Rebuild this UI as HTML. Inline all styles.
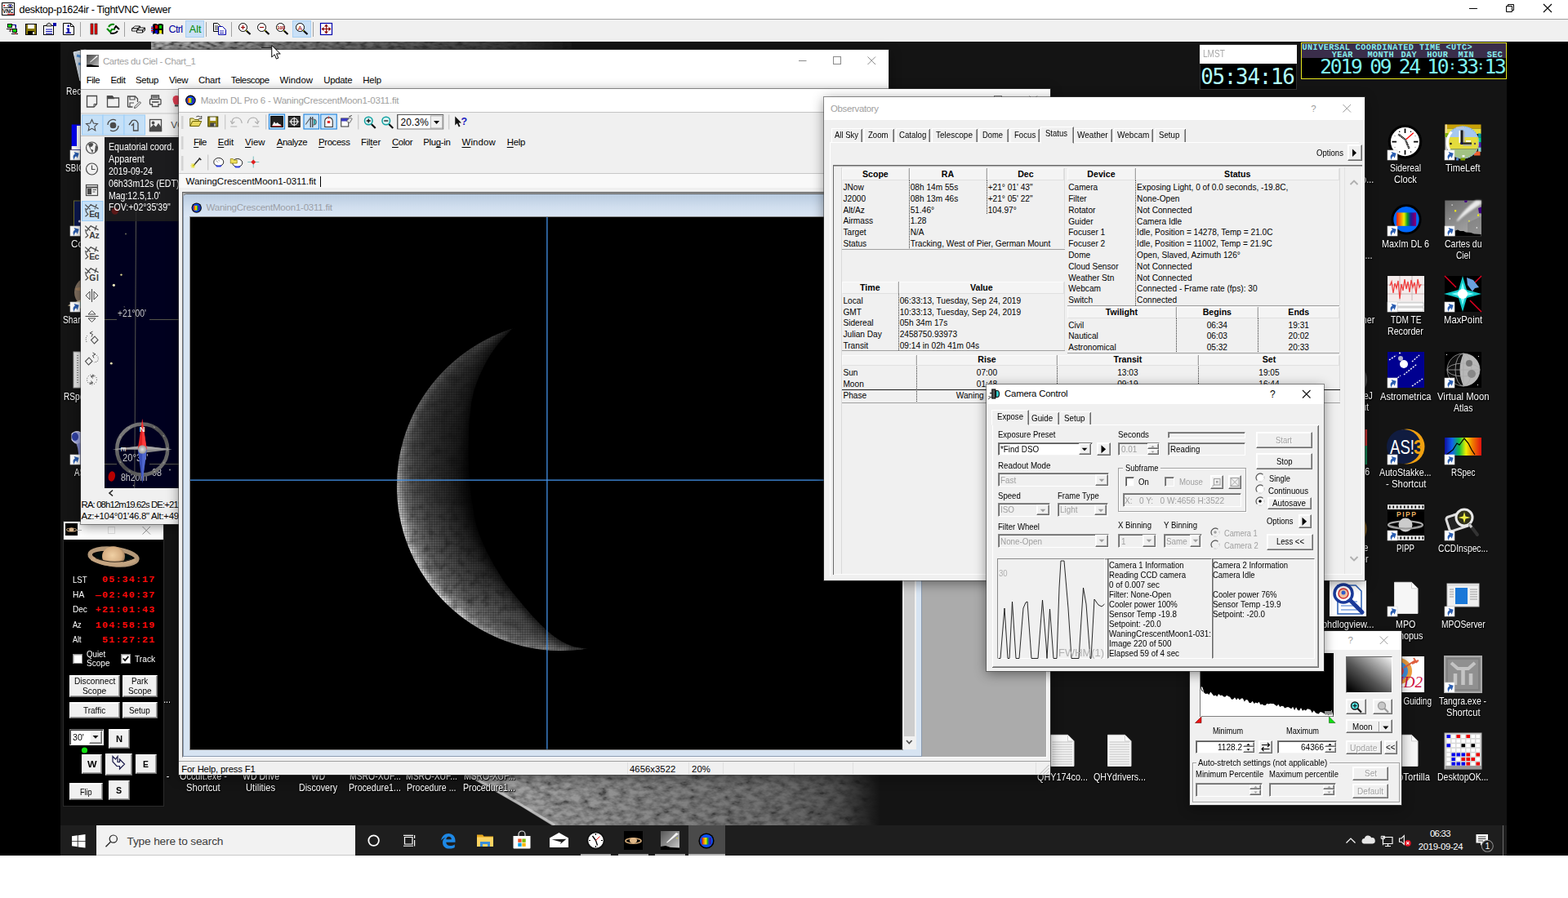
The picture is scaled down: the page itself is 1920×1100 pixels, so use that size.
<!DOCTYPE html>
<html lang="en"><head><meta charset="utf-8"><title>desktop-p1624ir - TightVNC Viewer</title>
<style>

html,body{margin:0;padding:0;background:#fff;}
body{width:1920px;height:1100px;overflow:hidden;}
#root{position:relative;width:1920px;height:1100px;overflow:hidden;background:#fff;font-family:"Liberation Sans",sans-serif;font-size:12px;color:#000;line-height:1;}
#root div,#root span,#root svg{position:absolute;box-sizing:border-box;}
#root span{white-space:pre;}
#root svg{overflow:visible;}
.t{font-size:12px;}
.seg{font-family:"Liberation Sans",sans-serif;}


.dl2{font-size:12.1px;color:#fff;white-space:pre;transform-origin:0 50%;text-shadow:0 1px 2px #000,0 0 2px #000,1px 1px 1px #000;}
.dl{font-size:11.3px;color:#fff;text-align:center;line-height:14px;width:90px;text-shadow:0 1px 2px #000,0 0 2px #000,1px 1px 1px #000;letter-spacing:-0.1px;white-space:pre;}
#root .dl{white-space:pre;}


.mono{font-family:"DejaVu Sans Mono","Liberation Mono",monospace;}
.lmono{font-family:"Liberation Mono",monospace;}
.utc1{font-family:"Liberation Mono",monospace;font-weight:bold;font-size:10.2px;color:#86ecec;letter-spacing:0.4px;}
.utcd{font-family:"DejaVu Sans Mono",monospace;font-size:24.5px;color:#7ff4f4;letter-spacing:-2.2px;}


.btn{background:#f0f0f0;border:1px solid;border-color:#fff #6a6a6a #6a6a6a #fff;box-shadow:inset -1px -1px 0 #a0a0a0, inset 1px 1px 0 #fdfdfd;}


.win{box-shadow:0 0 0 1px rgba(60,60,60,.55),0 3px 14px rgba(0,0,0,.45);}
.mn{font-size:11.35px;color:#000;letter-spacing:-0.1px;}
.cdl{font-size:12.1px;color:#fff;letter-spacing:-0.1px;}


.mu{text-decoration:underline;text-underline-offset:1.5px;text-decoration-thickness:1px;}


.sunk{background:#fff;border:1px solid;border-color:#7a7a7a #f4f4f4 #f4f4f4 #7a7a7a;box-shadow:inset 1px 1px 0 #5a5a5a;}
.sunkg{background:#f0f0f0;border:1px solid;border-color:#8a8a8a #fff #fff #8a8a8a;box-shadow:inset 1px 1px 0 #6a6a6a;}
.grp{border:1px solid #fff;box-shadow:inset 1px 1px 0 #a0a0a0, 1px 1px 0 #fff;border-color:#a0a0a0 #fff #fff #a0a0a0;}
.grp2{border:1px solid #a0a0a0;box-shadow:1px 1px 0 #fff, inset 1px 1px 0 #fff;}


.th{background:#f4f4f4;border:1px solid;border-color:#fcfcfc #e0e0e0 #e0e0e0 #fcfcfc;}


.dis{color:#a0a0a0;}


.tbt{font-size:11.2px;color:#fff;letter-spacing:-0.05px;}

</style></head>
<body>
<div id="root">
<div style="left:0px;top:0px;width:1920px;height:23px;background:#fff;"></div>
<div style="left:0px;top:23px;width:1920px;height:1px;background:#a0a0a0;"></div>
<div style="left:0px;top:24px;width:1920px;height:27px;background:#f0f0f0;"></div>
<svg style="left:2px;top:3px" width="16" height="16" viewBox="0 0 16 16">
<rect x="0.5" y="0.5" width="15" height="15" fill="#fff" stroke="#000"/>
<path d="M2 3l2 1.5M4 3l-2 1.5" stroke="#c00" stroke-width="1"/>
<ellipse cx="10.5" cy="4" rx="3" ry="1.6" fill="#fff" stroke="#000" stroke-width=".8"/><circle cx="10.5" cy="4" r="1.2" fill="#22c"/>
<text x="1.2" y="13" font-family="Liberation Sans,sans-serif" font-weight="bold" font-size="8" textLength="13.5" lengthAdjust="spacingAndGlyphs" fill="#000">VNC</text>
<path d="M2 6.5h12" stroke="#000" stroke-width=".8"/>
<path d="M7 14.2h8" stroke="#e00" stroke-width="1"/>
</svg>
<span class="t" style="left:23.50px;top:6.00px;font-size:12.6px;color:#000;letter-spacing:-0.351px;">desktop-p1624ir - TightVNC Viewer</span>
<svg style="left:1780px;top:0" width="140" height="23" viewBox="0 0 140 23">
<path d="M19 10.5h10" stroke="#000" stroke-width="1"/>
<path d="M64.5 7.5h7v7h-7z M66.5 7.5v-2h7v7h-2" fill="none" stroke="#000" stroke-width="1"/>
<path d="M110 5l10 10M120 5l-10 10" stroke="#000" stroke-width="1.1"/>
</svg>
<svg style="left:0;top:0" width="420" height="51" viewBox="0 0 420 51"><rect x="227.5" y="25.5" width="22" height="20" fill="#c9e0f7" stroke="#a8d0f3"/><rect x="358.5" y="25.5" width="22" height="20" fill="#c9e0f7" stroke="#a8d0f3"/><path d="M98.5 27v18" stroke="#a0a0a0" stroke-width="1"/><path d="M152.5 27v18" stroke="#a0a0a0" stroke-width="1"/><path d="M252.5 27v18" stroke="#a0a0a0" stroke-width="1"/><path d="M283.5 27v18" stroke="#a0a0a0" stroke-width="1"/><path d="M383.5 27v18" stroke="#a0a0a0" stroke-width="1"/><g><rect x="9.5" y="29.5" width="5" height="4" fill="#0e0" stroke="#000"/><rect x="15.5" y="35.5" width="5" height="4" fill="#0e0" stroke="#000"/><path d="M8 35.5h7M14 41.5h8M15 30.5h4v4M11 38h3" stroke="#000" fill="none"/><path d="M12 36.5h2M18 41h2" stroke="#e00"/><path d="M16 30.5h3.5v4" stroke="#00a" fill="none"/></g><g><rect x="31.5" y="29.5" width="13" height="13" fill="#8a7a00" stroke="#000"/><rect x="34" y="30" width="8" height="5" fill="#fff"/><rect x="34" y="38" width="8" height="5" fill="#000"/><rect x="40" y="39" width="2" height="3" fill="#ddd"/></g><g><rect x="53.5" y="31.5" width="12" height="11" fill="#fff" stroke="#000"/><path d="M57 30l3-2 3 2v2h-6z" fill="#ccc" stroke="#000" stroke-width=".8"/><rect x="65" y="28" width="4" height="4" fill="#00a"/><path d="M56 36h8M56 38.5h8M56 41h8" stroke="#00a"/></g><g><path d="M77.5 28.5h9l4 4v10h-13z" fill="#fff" stroke="#000"/><path d="M86.5 28.5v4h4" fill="none" stroke="#000"/><rect x="82.5" y="30.5" width="2.5" height="2.5" fill="#00a"/><path d="M81.5 34.5h3.5v5h2v1.5h-6.5v-1.5h2v-3.5h-1z" fill="#00a"/></g><g><rect x="111" y="29" width="3" height="13" fill="#e00" stroke="#000" stroke-width=".6"/><rect x="116" y="29" width="3" height="13" fill="#e00" stroke="#000" stroke-width=".6"/></g><g><path d="M131 35l4 4 2-3h4" fill="none" stroke="#080" stroke-width="2.2"/><path d="M133 33q2-4 7-3" fill="none" stroke="#080" stroke-width="2"/><path d="M146 36l-4-4-2 3" fill="none" stroke="#000" stroke-width="2"/><path d="M144 38q-3 4-9 2.5" fill="none" stroke="#000" stroke-width="2"/></g><g fill="#fff" stroke="#000" stroke-width=".9"><path d="M161.500 35l4-3h6l-3 3z"/><path d="M161.500 35h7v3h-7z"/><path d="M168.500 35l3-3v3l-3 3z" fill="#bbb"/><path d="M167.500 37l4-3h6l-3 3z"/><path d="M167.500 37h7v3h-7z"/><path d="M174.500 37l3-3v3l-3 3z" fill="#bbb"/></g><g><path d="M187 30q3-2 6 0v12q-3-2-6 0z" fill="#000"/><path d="M193 30q3-2 7 0v12q-4-2-7 0z" fill="#000"/><rect x="190" y="31" width="3" height="4" fill="#e00"/><rect x="195" y="31" width="3" height="4" fill="#0c0"/><rect x="190" y="37" width="3" height="4" fill="#00c"/><rect x="195" y="37" width="3" height="4" fill="#ee0"/><path d="M185 33h3M185 36h3M185 39h3" stroke="#00c"/><path d="M185 34.500h3M185 37.500h3" stroke="#e00"/></g><g fill="#fff" stroke="#000"><path d="M261.500 28.500h5l3 3v7h-8z"/><path d="M263 32h4M263 34h4M263 36h4" stroke-width=".8"/><path d="M267.500 32.500h5l4 4v6h-9z" stroke="#00a"/><path d="M269 38h5M269 40.500h5" stroke="#00a" stroke-width=".9"/></g><g><path d="M301 37l5.500 5" stroke="#000" stroke-width="2.2"/><path d="M300 36l2 2" stroke="#dd0" stroke-width="1.500"/><circle cx="297.5" cy="33.500" r="5" fill="#fff" stroke="#000" stroke-width="1"/><path d="M295 33.500h5M297.500 31v5" stroke="#900" stroke-width="1.200"/></g><g><path d="M324 37l5.500 5" stroke="#000" stroke-width="2.2"/><path d="M323 36l2 2" stroke="#dd0" stroke-width="1.500"/><circle cx="320.5" cy="33.500" r="5" fill="#fff" stroke="#000" stroke-width="1"/><path d="M318 33.500h5" stroke="#900" stroke-width="1.200"/></g><g><path d="M347 37l5.500 5" stroke="#000" stroke-width="2.2"/><path d="M346 36l2 2" stroke="#dd0" stroke-width="1.500"/><circle cx="343.5" cy="33.500" r="5" fill="#fff" stroke="#000" stroke-width="1"/><text x="339.500" y="36" font-size="6" font-family="Liberation Sans,sans-serif" font-weight="bold" fill="#900" textLength="9" lengthAdjust="spacingAndGlyphs">100</text></g><g><path d="M371 37l5.500 5" stroke="#000" stroke-width="2.2"/><path d="M370 36l2 2" stroke="#dd0" stroke-width="1.500"/><circle cx="367.5" cy="33.500" r="5" fill="#fff" stroke="#000" stroke-width="1"/><text x="364.800" y="36.500" font-size="8" font-family="Liberation Sans,sans-serif" fill="#900">A</text></g><g><rect x="392.500" y="28.500" width="14" height="14" fill="#fff" stroke="#00a" stroke-width="1.200"/><path d="M399.500 29.500l-2.500 3h5zM399.500 41.500l-2.500-3h5zM393.500 35.500l3-2.500v5zM405.500 35.500l-3-2.500v5z" fill="#800"/><path d="M399.500 32v7M396 35.500h7" stroke="#800" stroke-width="1"/></g></svg>
<span class="t" style="left:206.50px;top:30.00px;font-size:12.6px;color:#0000a0;letter-spacing:-0.699px;">Ctrl</span>
<span class="t" style="left:231.80px;top:30.00px;font-size:12.6px;color:#008a00;letter-spacing:-0.002px;">Alt</span>
<div style="left:0px;top:51px;width:1920px;height:997px;background:#000;"></div>
<div style="left:74px;top:51px;width:1771px;height:960px;background:#141414;"></div>
<svg style="left:74px;top:51px" width="1772" height="960" viewBox="74 51 1772 960">
<defs>
<filter id="crat" x="0" y="0" width="100%" height="100%"><feTurbulence type="fractalNoise" baseFrequency="0.09 0.16" numOctaves="3" seed="7" result="n"/><feColorMatrix in="n" type="matrix" values="0 0 0 0 0  0 0 0 0 0  0 0 0 0 0  1.9 0 0 0 -0.55" result="a"/><feComposite in="SourceGraphic" in2="a" operator="arithmetic" k1="-0.75" k2="1" k3="0" k4="0"/></filter>
<filter id="crat2" x="0" y="0" width="100%" height="100%"><feTurbulence type="fractalNoise" baseFrequency="0.12 0.3" numOctaves="2" seed="3" result="n"/><feColorMatrix in="n" type="matrix" values="0 0 0 0 0  0 0 0 0 0  0 0 0 0 0  2.2 0 0 0 -0.6" result="a"/><feComposite in="SourceGraphic" in2="a" operator="arithmetic" k1="-0.8" k2="1" k3="0" k4="0"/></filter>
<linearGradient id="wg" x1="570" y1="0" x2="1078" y2="0" gradientUnits="userSpaceOnUse"><stop offset="0" stop-color="#141414" stop-opacity="0"/><stop offset=".3" stop-color="#141414" stop-opacity=".15"/><stop offset=".55" stop-color="#141414" stop-opacity=".3"/><stop offset=".78" stop-color="#141414" stop-opacity=".42"/><stop offset=".9" stop-color="#141414" stop-opacity=".6"/><stop offset=".96" stop-color="#141414" stop-opacity=".85"/><stop offset="1" stop-color="#141414" stop-opacity="1"/></linearGradient>
<linearGradient id="wt" x1="185" y1="0" x2="700" y2="0" gradientUnits="userSpaceOnUse"><stop offset="0" stop-color="#b8b8b8"/><stop offset=".25" stop-color="#8c8c8c"/><stop offset=".6" stop-color="#5c5c5c"/><stop offset=".85" stop-color="#3a3a3a"/><stop offset="1" stop-color="#141414"/></linearGradient>
</defs>
<g filter="url(#crat)"><path d="M513 920 Q599 962 677 1011 L1080 1011 L1080 940 L553 920z" fill="#acacac"/></g><path d="M513 920 Q599 962 677 1011 L1082 1011 L1082 940 L553 920z" fill="url(#wg)"/><path d="M514 919 Q600 961 679 1011" fill="none" stroke="#e0e0e0" stroke-opacity=".55" stroke-width="3.500"/>
<g filter="url(#crat2)"><rect x="185" y="51" width="515" height="11" fill="url(#wt)"/></g>
</svg>
<span class="dl2" style="left:1643.12px;top:214.00px;transform:scaleX(0.8825);">Studio...</span>
<span class="dl2" style="left:1651.81px;top:307.00px;transform:scaleX(0.8825);">Tool...</span>
<span class="dl2" style="left:1616.04px;top:386.00px;transform:scaleX(0.8825);">CloudWatcher</span>
<span class="dl2" style="left:1621.36px;top:479.00px;transform:scaleX(0.8825);">AstroImageJ</span>
<span class="dl2" style="left:1630.01px;top:493.00px;transform:scaleX(0.8825);">- Shortcut</span>
<span class="dl2" style="left:1625.06px;top:572.00px;transform:scaleX(0.8825);">RegiStax 6</span>
<span class="dl2" style="left:1618.92px;top:665.00px;transform:scaleX(0.8825);">FireCapture</span>
<span class="dl2" style="left:1630.77px;top:679.00px;transform:scaleX(0.8825);">Launcher</span>
<svg style="left:1628.3px;top:431.300px" width="45" height="45"><circle cx="26" cy="34" r="20" fill="#505050"/></svg>
<svg style="left:1628.3px;top:524.600px" width="45" height="45"><rect x="10" y="1" width="36" height="43" fill="#284a9a"/><rect x="42" y="1" width="4" height="20" fill="#c03030"/><rect x="42" y="21" width="4" height="23" fill="#108050"/></svg>
<svg style="left:1628.3px;top:617.800px" width="45" height="45"><circle cx="24" cy="30" r="21.500" fill="#8a6420"/></svg>
<svg style="left:1628.3px;top:711.12px" width="45" height="45" viewBox="0 0 45 45"><rect x="0" y="0" width="45" height="44" fill="#fff"/><path d="M10 6h22l7 7v28H10z" fill="#fff" stroke="#2a5fb4" stroke-width="1.500"/><path d="M14 26h20M14 31h20M14 36h20" stroke="#7aa0e0" stroke-width="1.300"/><circle cx="17" cy="16" r="11" fill="#fff" stroke="#1a3a9a" stroke-width="3.500"/><circle cx="17" cy="16" r="6" fill="#f0c0a0" stroke="#d03030" stroke-width="1.500"/><circle cx="17" cy="15" r="2.500" fill="#3060d0"/><path d="M26 25l14 14" stroke="#1a3a9a" stroke-width="5" stroke-linecap="round"/></svg><span class="dl2" style="left:1619.05px;top:759.00px;transform:scaleX(0.9077);">phdlogview...</span>
<svg style="left:1698.7px;top:151.5px" width="45" height="45" viewBox="0 0 45 45"><circle cx="21.500" cy="21.600" r="20.800" fill="#000"/><circle cx="21.500" cy="21.600" r="17.600" fill="#fff"/><path d="M21.500 5.500v5.500M21.500 32v5.500M5.500 21.600h5.500M32 21.600h5.500" stroke="#000" stroke-width="1.700"/><g fill="#000"><circle cx="14.700" cy="9.200" r=".8"/><circle cx="28.500" cy="9.200" r=".8"/><circle cx="14.700" cy="34" r=".8"/><circle cx="28.500" cy="34" r=".8"/></g><g fill="#aaa"><circle cx="9" cy="14.500" r=".8"/><circle cx="34" cy="14.500" r=".8"/><circle cx="9" cy="28.500" r=".8"/><circle cx="34" cy="28.500" r=".8"/></g><path d="M22.500 19.500L13.300 12.500M22.500 20.500l4 9.500" stroke="#000" stroke-width="2.400" stroke-dasharray="1.200 .600"/><path d="M22.800 18.800l9-8" stroke="#f00" stroke-width="1.300"/><g transform="translate(0,32)"><rect x="0" y="0" width="12" height="12" fill="#fff" stroke="#d4d4d4" stroke-width=".6"/><g transform="rotate(-28 6 6)"><path d="M2.200 10.800C2 6.500 3.800 4.800 6.600 4.700V1.800L11.200 6.200L6.600 10.600V7.600C4.600 7.600 3.300 8.600 2.200 10.800z" fill="#2a5db0"/></g></g></svg><span class="dl2" style="left:1702.20px;top:200.00px;transform:scaleX(0.8559);">Sidereal</span><span class="dl2" style="left:1707.30px;top:214.00px;transform:scaleX(0.9188);">Clock</span>
<svg style="left:1769.0px;top:151.5px" width="45" height="45" viewBox="0 0 45 45"><defs><clipPath id="tlc"><circle cx="22" cy="22.500" r="20"/></clipPath></defs><rect x="0.500" y="0.500" width="44" height="5" fill="#c8a008"/><rect x="0.500" y="5.500" width="44" height="6.500" fill="#e6de40"/><rect x="0.500" y="0.500" width="2.500" height="11" fill="#f0d890"/><rect x="0.500" y="12" width="3" height="20" fill="#c8c8c8"/><rect x="0.500" y="11" width="4" height="5" fill="#80b000"/><rect x="41" y="11.500" width="3.500" height="5" fill="#0098a0"/><rect x="41" y="16.500" width="3.500" height="6" fill="#00d890"/><rect x="41" y="22.500" width="3.500" height="6" fill="#5020c0"/><rect x="41" y="28.500" width="3.500" height="5.500" fill="#80d0d0"/><rect x="36" y="33.500" width="7.500" height="5" fill="#f06030"/><rect x="37" y="16" width="4.500" height="14" fill="#d0a040"/><g clip-path="url(#tlc)"><rect x="0" y="0" width="45" height="16" fill="#a6c8f0"/><rect x="0" y="16" width="45" height="14.500" fill="#e4dc3c"/><rect x="0" y="30.500" width="45" height="15" fill="#a2c284"/></g><circle cx="22" cy="22.500" r="19.500" fill="none" stroke="#8ab0e0" stroke-width="1.300" stroke-dasharray="1.500 1.500"/><path d="M8.500 9.500A19 19 0 0 0 6 32" fill="none" stroke="#fff" stroke-width="3.200"/><path d="M14 4.500h10" stroke="#c8c8d0" stroke-width="1.500"/><rect x="17.500" y="8" width="2" height="15" fill="#fff"/><rect x="26" y="20" width="6" height="1.800" fill="#fff"/><rect x="22.500" y="8.500" width="2" height="16.500" fill="#b0b0b0"/><rect x="22.500" y="25" width="10.500" height="1.600" fill="#b0b0b0"/><rect x="19.500" y="7.500" width="3" height="17" fill="#181818"/><rect x="19.500" y="22.500" width="13.500" height="2.300" fill="#282828"/><rect x="19.500" y="22.500" width="2.500" height="2.300" fill="#000060"/><circle cx="7.500" cy="24" r="1.200" fill="#111"/><circle cx="37" cy="24" r="1.200" fill="#555"/><rect x="14" y="41.500" width="3" height="3" fill="#5080d0"/><rect x="19.500" y="41.500" width="5.500" height="3" fill="#80a000"/><rect x="21.500" y="38" width="3" height="2.500" fill="#f0f0f0"/><g transform="translate(0,32)"><rect x="0" y="0" width="12" height="12" fill="#fff" stroke="#d4d4d4" stroke-width=".6"/><g transform="rotate(-28 6 6)"><path d="M2.200 10.800C2 6.500 3.800 4.800 6.600 4.700V1.800L11.200 6.200L6.600 10.600V7.600C4.600 7.600 3.300 8.600 2.200 10.800z" fill="#2a5db0"/></g></g></svg><span class="dl2" style="left:1770.25px;top:200.00px;transform:scaleX(0.9116);">TimeLeft</span>
<svg style="left:1698.7px;top:244.76999999999998px" width="45" height="45" viewBox="0 0 45 45"><defs><linearGradient id="rb" x1="0" x2="1"><stop offset="0" stop-color="#f02020"/><stop offset=".2" stop-color="#f88000"/><stop offset=".38" stop-color="#f0f000"/><stop offset=".55" stop-color="#10a020"/><stop offset=".72" stop-color="#1020a0"/><stop offset=".86" stop-color="#600080"/><stop offset="1" stop-color="#900070"/></linearGradient></defs><circle cx="23" cy="23.800" r="18.600" fill="#000"/><circle cx="23" cy="23.800" r="15.700" fill="#0068ff"/><rect x="11" y="15.400" width="24.100" height="16.400" fill="url(#rb)"/><g transform="translate(0,32)"><rect x="0" y="0" width="12" height="12" fill="#fff" stroke="#d4d4d4" stroke-width=".6"/><g transform="rotate(-28 6 6)"><path d="M2.200 10.800C2 6.500 3.800 4.800 6.600 4.700V1.800L11.200 6.200L6.600 10.600V7.600C4.600 7.600 3.300 8.600 2.200 10.800z" fill="#2a5db0"/></g></g></svg><span class="dl2" style="left:1692.20px;top:293.00px;transform:scaleX(0.8954);">MaxIm DL 6</span>
<svg style="left:1769.0px;top:244.76999999999998px" width="45" height="45" viewBox="0 0 45 45"><defs><linearGradient id="cg" x1="0" y1="0" x2=".6" y2="1"><stop offset="0" stop-color="#6a6a6a"/><stop offset=".55" stop-color="#8c8c8c"/><stop offset="1" stop-color="#a8a8a8"/></linearGradient><filter id="cbl" x="-20%" y="-20%" width="140%" height="140%"><feGaussianBlur stdDeviation="1.100"/></filter></defs><rect x="0.300" y="0.500" width="44.700" height="43.700" fill="url(#cg)"/><path d="M28 44V28L45 20V44z" fill="#7c7c7c" opacity=".6"/><path d="M13 37.500l3-1 3 1.500h4l3 1.500 6 .5 4 1.500 8.500 .5V44.200H13z" fill="#000"/><g filter="url(#cbl)"><path d="M14.500 25.500Q24 11 38 0.500h6.500V5Q28 15 16 26z" fill="#f4f4f4" opacity=".9"/></g><path d="M24 0.500h4l-1 2.500h-2.500zM41 10l4-1.500v8l-3-.5z" fill="#400080"/><g fill="#f0e818"><rect x="12" y="12.200" width="2.200" height="2.200"/><rect x="40" y="17.500" width="2.200" height="2.200"/><rect x="29" y="24.800" width="1.800" height="1.800" fill="#d8d850"/></g><g fill="#fff"><rect x="8.500" y="5.500" width="1.200" height="1.200"/><rect x="5.700" y="22.300" width="1.300" height="1.300"/><rect x="38.700" y="33.300" width="1.300" height="1.300"/></g><g transform="translate(0,32)"><rect x="0" y="0" width="12" height="12" fill="#fff" stroke="#d4d4d4" stroke-width=".6"/><g transform="rotate(-28 6 6)"><path d="M2.200 10.800C2 6.500 3.800 4.800 6.600 4.700V1.800L11.200 6.200L6.600 10.600V7.600C4.600 7.600 3.300 8.600 2.200 10.800z" fill="#2a5db0"/></g></g></svg><span class="dl2" style="left:1768.75px;top:293.00px;transform:scaleX(0.8673);">Cartes du</span><span class="dl2" style="left:1782.75px;top:307.00px;transform:scaleX(0.8395);">Ciel</span>
<svg style="left:1698.7px;top:338.03999999999996px" width="45" height="45" viewBox="0 0 45 45"><rect x="0" y="0" width="45" height="44" fill="#f4ecec"/><path d="M0 11h45M0 22h45M15 0v30M30 0v30" stroke="#c8b8b8" stroke-width="1"/><path d="M3 12l2-5 2 14 2-12 2 6 2-9 2 22 2-18 2 8 2-14 2 12 2-9 2 13 2-15 2 9 2-6 2 14 2-18 2 10 2-4" stroke="#f04040" stroke-width="1.300" fill="none"/><rect x="0" y="31" width="45" height="13" fill="#e8e8e8"/><rect x="12" y="33" width="32" height="4" fill="#fff" stroke="#999" stroke-width=".5"/><rect x="12" y="39" width="32" height="4" fill="#fff" stroke="#999" stroke-width=".5"/><g transform="translate(0,32)"><rect x="0" y="0" width="12" height="12" fill="#fff" stroke="#d4d4d4" stroke-width=".6"/><g transform="rotate(-28 6 6)"><path d="M2.200 10.800C2 6.500 3.800 4.800 6.600 4.700V1.800L11.200 6.200L6.600 10.600V7.600C4.600 7.600 3.300 8.600 2.200 10.800z" fill="#2a5db0"/></g></g></svg><span class="dl2" style="left:1702.50px;top:386.00px;transform:scaleX(0.8345);">TDM TE</span><span class="dl2" style="left:1699.30px;top:400.00px;transform:scaleX(0.8801);">Recorder</span>
<svg style="left:1769.0px;top:338.03999999999996px" width="45" height="45" viewBox="0 0 45 45"><rect x="0" y="0" width="45" height="44" fill="#000"/><path d="M0 0l14 14M45 0L31 14M31 30l14 14" stroke="#e00020" stroke-width="1.500"/><path d="M22 0l5 17 18 5-18 5-5 17-5-17-18-5 18-5z" fill="#10c8c8"/><path d="M22 8l3 11 11 3-11 3-3 11-3-11-11-3 11-3z" fill="#80ffff"/><circle cx="22" cy="22" r="6" fill="#fff"/><path d="M27 2l8 3 7 9-5 1-3 4-6-8z" fill="#6aa0e0"/><g transform="translate(0,32)"><rect x="0" y="0" width="12" height="12" fill="#fff" stroke="#d4d4d4" stroke-width=".6"/><g transform="rotate(-28 6 6)"><path d="M2.200 10.800C2 6.500 3.800 4.800 6.600 4.700V1.800L11.200 6.200L6.600 10.600V7.600C4.600 7.600 3.300 8.600 2.200 10.800z" fill="#2a5db0"/></g></g></svg><span class="dl2" style="left:1767.95px;top:386.00px;transform:scaleX(0.9338);">MaxPoint</span>
<svg style="left:1698.7px;top:431.31px" width="45" height="45" viewBox="0 0 45 45"><rect x="0" y="0" width="45" height="44" fill="#000090"/><g stroke="#fff" stroke-width="1.400" stroke-dasharray="2 1.500"><path d="M2 10l9-6M30 12l9-8M20 28l16-13M7 36l9-7M30 42l13-9"/></g><circle cx="20" cy="15" r="5" fill="#fff"/><circle cx="16" cy="8" r="3" fill="#ddd" opacity=".8"/><circle cx="15" cy="1.500" r="1" fill="#fff"/><g transform="translate(0,32)"><rect x="0" y="0" width="12" height="12" fill="#fff" stroke="#d4d4d4" stroke-width=".6"/><g transform="rotate(-28 6 6)"><path d="M2.200 10.800C2 6.500 3.800 4.800 6.600 4.700V1.800L11.200 6.200L6.600 10.600V7.600C4.600 7.600 3.300 8.600 2.200 10.800z" fill="#2a5db0"/></g></g></svg><span class="dl2" style="left:1690.00px;top:480.00px;transform:scaleX(0.9188);">Astrometrica</span>
<svg style="left:1769.0px;top:431.31px" width="45" height="45" viewBox="0 0 45 45"><rect x="0" y="0" width="45" height="44" fill="#000"/><circle cx="23" cy="22" r="20" fill="#111" stroke="#999" stroke-width=".8"/><path d="M23 2A20 20 0 0 1 23 42Q14 22 23 2z" fill="#b8b8b8"/><g fill="none" stroke="#aaa" stroke-width=".8"><ellipse cx="23" cy="22" rx="10" ry="20"/><ellipse cx="23" cy="22" rx="20" ry="8"/><path d="M3 22h40M23 2v40"/></g><circle cx="30" cy="14" r="4" fill="#777"/><circle cx="33" cy="27" r="5" fill="#888"/><g fill="#fff"><rect x="2" y="3" width="1" height="1"/><rect x="41" y="5" width="1" height="1"/><rect x="40" y="40" width="1" height="1"/><rect x="4" y="38" width="1" height="1"/></g><g transform="translate(0,32)"><rect x="0" y="0" width="12" height="12" fill="#fff" stroke="#d4d4d4" stroke-width=".6"/><g transform="rotate(-28 6 6)"><path d="M2.200 10.800C2 6.500 3.800 4.800 6.600 4.700V1.800L11.200 6.200L6.600 10.600V7.600C4.600 7.600 3.300 8.600 2.200 10.800z" fill="#2a5db0"/></g></g></svg><span class="dl2" style="left:1759.70px;top:480.00px;transform:scaleX(0.9393);">Virtual Moon</span><span class="dl2" style="left:1779.80px;top:494.00px;transform:scaleX(0.8699);">Atlas</span>
<svg style="left:1698.7px;top:524.5799999999999px" width="45" height="45" viewBox="0 0 45 45"><circle cx="24" cy="22" r="21.500" fill="#f0a010"/><circle cx="20" cy="22" r="21" fill="#101c40"/><text x="3" y="31" font-family="Liberation Sans,sans-serif" font-size="24" fill="#fff" textLength="30" lengthAdjust="spacingAndGlyphs">AS!</text><text x="32" y="31" font-family="Liberation Sans,sans-serif" font-size="24" fill="#f0a010" font-weight="bold" textLength="12" lengthAdjust="spacingAndGlyphs">3</text><g transform="translate(0,32)"><rect x="0" y="0" width="12" height="12" fill="#fff" stroke="#d4d4d4" stroke-width=".6"/><g transform="rotate(-28 6 6)"><path d="M2.200 10.800C2 6.500 3.800 4.800 6.600 4.700V1.800L11.200 6.200L6.600 10.600V7.600C4.600 7.600 3.300 8.600 2.200 10.800z" fill="#2a5db0"/></g></g></svg><span class="dl2" style="left:1689.40px;top:573.00px;transform:scaleX(0.8837);">AutoStakke...</span><span class="dl2" style="left:1696.50px;top:587.00px;transform:scaleX(0.9418);">- Shortcut</span>
<svg style="left:1769.0px;top:524.5799999999999px" width="45" height="45" viewBox="0 0 45 45"><defs><linearGradient id="sp" x1="0" x2="1"><stop offset="0" stop-color="#1010a0"/><stop offset=".2" stop-color="#1060f0"/><stop offset=".4" stop-color="#10c040"/><stop offset=".58" stop-color="#f0f000"/><stop offset=".75" stop-color="#f08000"/><stop offset="1" stop-color="#e01010"/></linearGradient></defs><rect x="0" y="11" width="45" height="22" fill="url(#sp)"/><path d="M2 32l8-6 5-8 3 2 6-8 5 6 4 8 4 6" stroke="#000" stroke-width="1.200" fill="none"/><g transform="translate(0,32)"><rect x="0" y="0" width="12" height="12" fill="#fff" stroke="#d4d4d4" stroke-width=".6"/><g transform="rotate(-28 6 6)"><path d="M2.200 10.800C2 6.500 3.800 4.800 6.600 4.700V1.800L11.200 6.200L6.600 10.600V7.600C4.600 7.600 3.300 8.600 2.200 10.800z" fill="#2a5db0"/></g></g></svg><span class="dl2" style="left:1776.85px;top:573.00px;transform:scaleX(0.8067);">RSpec</span>
<svg style="left:1698.7px;top:617.8499999999999px" width="45" height="45" viewBox="0 0 45 45"><rect x="0" y="0" width="45" height="44" fill="#000"/><rect x="0" y="0" width="45" height="6" fill="#ddd"/><rect x="0" y="38" width="45" height="6" fill="#ddd"/><path d="M2 3h42M2 41h42" stroke="#000" stroke-width="3" stroke-dasharray="1.500 3"/><text x="11" y="15" font-family="Liberation Sans,sans-serif" font-size="8.500" font-weight="bold" fill="#e8b060" textLength="24">PIPP</text><ellipse cx="22" cy="25" rx="21" ry="4.500" fill="none" stroke="#aaa" stroke-width="2.200"/><circle cx="22" cy="25" r="8.500" fill="#ccc"/><path d="M2 26q20 7 41 0" stroke="#999" stroke-width="2" fill="none"/><g transform="translate(0,32)"><rect x="0" y="0" width="12" height="12" fill="#fff" stroke="#d4d4d4" stroke-width=".6"/><g transform="rotate(-28 6 6)"><path d="M2.200 10.800C2 6.500 3.800 4.800 6.600 4.700V1.800L11.200 6.200L6.600 10.600V7.600C4.600 7.600 3.300 8.600 2.200 10.800z" fill="#2a5db0"/></g></g></svg><span class="dl2" style="left:1710.15px;top:666.00px;transform:scaleX(0.8015);">PIPP</span>
<svg style="left:1769.0px;top:617.8499999999999px" width="45" height="45" viewBox="0 0 45 45"><g transform="rotate(-18 22 22)"><rect x="4" y="10" width="26" height="18" rx="3" fill="#222" stroke="#ddd" stroke-width="3"/></g><circle cx="24" cy="16" r="10" fill="#30301a" stroke="#e8e8e8" stroke-width="3"/><path d="M24 9l1.500 5.500 6 1.500-6 1.500-1.500 5.500-1.500-5.500-6-1.500 6-1.500z" fill="#ee4"/><path d="M31 25l9 12" stroke="#333" stroke-width="4" stroke-linecap="round"/><path d="M30 24l3 4" stroke="#ccc" stroke-width="3"/><g transform="translate(0,32)"><rect x="0" y="0" width="12" height="12" fill="#fff" stroke="#d4d4d4" stroke-width=".6"/><g transform="rotate(-28 6 6)"><path d="M2.200 10.800C2 6.500 3.800 4.800 6.600 4.700V1.800L11.200 6.200L6.600 10.600V7.600C4.600 7.600 3.300 8.600 2.200 10.800z" fill="#2a5db0"/></g></g></svg><span class="dl2" style="left:1760.95px;top:666.00px;transform:scaleX(0.8492);">CCDInspec...</span>
<svg style="left:1698.7px;top:711.12px" width="45" height="45" viewBox="0 0 45 45"><path d="M8.500 2.300h21l7.500 7.500v30.700H8.500z" fill="#f6f6f6" stroke="#dcdcdc" stroke-width="1"/><path d="M29.500 2.300v7.500h7.500" fill="#fff" stroke="#d0d0d0" stroke-width="1"/><g transform="translate(0,32)"><rect x="0" y="0" width="12" height="12" fill="#fff" stroke="#d4d4d4" stroke-width=".6"/><g transform="rotate(-28 6 6)"><path d="M2.200 10.800C2 6.500 3.800 4.800 6.600 4.700V1.800L11.200 6.200L6.600 10.600V7.600C4.600 7.600 3.300 8.600 2.200 10.800z" fill="#2a5db0"/></g></g></svg><span class="dl2" style="left:1709.05px;top:759.00px;transform:scaleX(0.8816);">MPO</span><span class="dl2" style="left:1699.45px;top:773.00px;transform:scaleX(0.8981);">Canopus</span>
<svg style="left:1769.0px;top:711.12px" width="45" height="45" viewBox="0 0 45 45"><rect x="3" y="4" width="39" height="28" fill="#f0f0f0" stroke="#c0c0c0"/><rect x="3" y="4" width="39" height="3" fill="#ddd"/><rect x="13" y="9" width="15" height="20" fill="#1a78d8"/><path d="M6 11h5M6 14h5M6 17h5M6 20h5M31 11h9M31 14h9M31 17h9M31 20h9M31 23h9" stroke="#999" stroke-width="1"/><g transform="translate(0,32)"><rect x="0" y="0" width="12" height="12" fill="#fff" stroke="#d4d4d4" stroke-width=".6"/><g transform="rotate(-28 6 6)"><path d="M2.200 10.800C2 6.500 3.800 4.800 6.600 4.700V1.800L11.200 6.200L6.600 10.600V7.600C4.600 7.600 3.300 8.600 2.200 10.800z" fill="#2a5db0"/></g></g></svg><span class="dl2" style="left:1764.60px;top:759.00px;transform:scaleX(0.8512);">MPOServer</span>
<svg style="left:1698.7px;top:804.39px" width="45" height="45" viewBox="0 0 45 45"><rect x="0" y="0" width="45" height="44" fill="#fff"/><circle cx="14" cy="18" r="16" fill="#f0a040"/><circle cx="14" cy="18" r="11" fill="#4090e0"/><circle cx="14" cy="18" r="6" fill="#e04040"/><path d="M20 14l14-9M32 2l4 6M30 9l8-4" stroke="#e06040" stroke-width="2"/><text x="6" y="38" font-family="Liberation Serif,serif" font-style="italic" font-size="19" fill="#d01040">HD2</text></svg><span class="dl2" style="left:1689.20px;top:853.00px;transform:scaleX(0.8274);">PHD2 Guiding</span>
<svg style="left:1769.0px;top:804.39px" width="45" height="45" viewBox="0 0 45 45"><rect x="0" y="0" width="45" height="44" fill="#8c8c8c" stroke="#a8a8a8" stroke-width="2"/><rect x="3" y="3" width="39" height="38" fill="#909090" stroke="#7c7c7c" stroke-width="1.500"/><path d="M8 8l8 7h13l8-7" stroke="#c4c4c4" stroke-width="4" fill="none"/><path d="M22.500 15v20M13 21v14M32 21v14" stroke="#c4c4c4" stroke-width="4.500"/><g transform="translate(0,32)"><rect x="0" y="0" width="12" height="12" fill="#fff" stroke="#d4d4d4" stroke-width=".6"/><g transform="rotate(-28 6 6)"><path d="M2.200 10.800C2 6.500 3.800 4.800 6.600 4.700V1.800L11.200 6.200L6.600 10.600V7.600C4.600 7.600 3.300 8.600 2.200 10.800z" fill="#2a5db0"/></g></g></svg><span class="dl2" style="left:1762.45px;top:853.00px;transform:scaleX(0.8638);">Tangra.exe -</span><span class="dl2" style="left:1770.75px;top:867.00px;transform:scaleX(0.9209);">Shortcut</span>
<svg style="left:1698.7px;top:897.66px" width="45" height="45" viewBox="0 0 45 45"><path d="M8.500 2.300h21l7.500 7.500v30.700H8.500z" fill="#f6f6f6" stroke="#dcdcdc" stroke-width="1"/><path d="M29.500 2.300v7.500h7.500" fill="#fff" stroke="#d0d0d0" stroke-width="1"/></svg><span class="dl2" style="left:1691.70px;top:946.00px;transform:scaleX(0.9334);">AstroTortilla</span>
<svg style="left:1769.0px;top:897.66px" width="45" height="45" viewBox="0 0 45 45"><rect x="0" y="0" width="45" height="44" fill="#d8d8d8" stroke="#aaa"/><rect x="1" y="40" width="44" height="4" fill="#999"/><rect x="2.5" y="2.0" width="4.500" height="4" fill="#00e"/><rect x="8.5" y="2.0" width="4.500" height="4" fill="#fff"/><rect x="14.5" y="2.0" width="4.500" height="4" fill="#e00"/><rect x="20.5" y="2.0" width="4.500" height="4" fill="#fff"/><rect x="26.5" y="2.0" width="4.500" height="4" fill="#e00"/><rect x="32.5" y="2.0" width="4.500" height="4" fill="#fff"/><rect x="38.5" y="2.0" width="4.500" height="4" fill="#fff"/><rect x="2.5" y="7.6" width="4.500" height="4" fill="#fff"/><rect x="8.5" y="7.6" width="4.500" height="4" fill="#fff"/><rect x="14.5" y="7.6" width="4.500" height="4" fill="#fff"/><rect x="20.5" y="7.6" width="4.500" height="4" fill="#fff"/><rect x="26.5" y="7.6" width="4.500" height="4" fill="#fff"/><rect x="32.5" y="7.6" width="4.500" height="4" fill="#fff"/><rect x="38.5" y="7.6" width="4.500" height="4" fill="#fff"/><rect x="2.5" y="13.2" width="4.500" height="4" fill="#00e"/><rect x="8.5" y="13.2" width="4.500" height="4" fill="#fff"/><rect x="14.5" y="13.2" width="4.500" height="4" fill="#fff"/><rect x="20.5" y="13.2" width="4.500" height="4" fill="#000"/><rect x="26.5" y="13.2" width="4.500" height="4" fill="#fff"/><rect x="32.5" y="13.2" width="4.500" height="4" fill="#000"/><rect x="38.5" y="13.2" width="4.500" height="4" fill="#fff"/><rect x="2.5" y="18.8" width="4.500" height="4" fill="#fff"/><rect x="8.5" y="18.8" width="4.500" height="4" fill="#fff"/><rect x="14.5" y="18.8" width="4.500" height="4" fill="#fff"/><rect x="20.5" y="18.8" width="4.500" height="4" fill="#fff"/><rect x="26.5" y="18.8" width="4.500" height="4" fill="#fff"/><rect x="32.5" y="18.8" width="4.500" height="4" fill="#fff"/><rect x="38.5" y="18.8" width="4.500" height="4" fill="#fff"/><rect x="2.5" y="24.4" width="4.500" height="4" fill="#fff"/><rect x="8.5" y="24.4" width="4.500" height="4" fill="#00e"/><rect x="14.5" y="24.4" width="4.500" height="4" fill="#00e"/><rect x="20.5" y="24.4" width="4.500" height="4" fill="#00e"/><rect x="26.5" y="24.4" width="4.500" height="4" fill="#e00"/><rect x="32.5" y="24.4" width="4.500" height="4" fill="#fff"/><rect x="38.5" y="24.4" width="4.500" height="4" fill="#e00"/><rect x="2.5" y="30.0" width="4.500" height="4" fill="#fff"/><rect x="8.5" y="30.0" width="4.500" height="4" fill="#00e"/><rect x="14.5" y="30.0" width="4.500" height="4" fill="#fff"/><rect x="20.5" y="30.0" width="4.500" height="4" fill="#e00"/><rect x="26.5" y="30.0" width="4.500" height="4" fill="#e00"/><rect x="32.5" y="30.0" width="4.500" height="4" fill="#e00"/><rect x="38.5" y="30.0" width="4.500" height="4" fill="#fff"/><rect x="2.5" y="35.6" width="4.500" height="4" fill="#fff"/><rect x="8.5" y="35.6" width="4.500" height="4" fill="#00e"/><rect x="14.5" y="35.6" width="4.500" height="4" fill="#00e"/><rect x="20.5" y="35.6" width="4.500" height="4" fill="#00e"/><rect x="26.5" y="35.6" width="4.500" height="4" fill="#e00"/><rect x="32.5" y="35.6" width="4.500" height="4" fill="#fff"/><rect x="38.5" y="35.6" width="4.500" height="4" fill="#e00"/></svg><span class="dl2" style="left:1760.25px;top:946.00px;transform:scaleX(0.8686);">DesktopOK...</span>
<svg style="left:1278.0px;top:897.66px" width="45" height="45" viewBox="0 0 45 45"><path d="M8.500 2.300h21l7.500 7.500v30.700H8.500z" fill="#f6f6f6" stroke="#dcdcdc" stroke-width="1"/><path d="M29.500 2.300v7.500h7.500" fill="#fff" stroke="#d0d0d0" stroke-width="1"/><path d="M10.500 11h24.500M10.500 14h24.500M10.500 17h24.500M10.500 20h24.500M10.500 23h24.500M10.500 26h24.500M10.500 29h24.500M10.500 32h24.500M10.500 35h24.500M10.500 38h24.500" stroke="#c0c0c0" stroke-width="1.100"/></svg><span class="dl2" style="left:1269.50px;top:946.00px;transform:scaleX(0.8950);">QHY174co...</span>
<svg style="left:1348.0px;top:897.66px" width="45" height="45" viewBox="0 0 45 45"><path d="M8.500 2.300h21l7.500 7.500v30.700H8.500z" fill="#f6f6f6" stroke="#dcdcdc" stroke-width="1"/><path d="M29.500 2.300v7.500h7.500" fill="#fff" stroke="#d0d0d0" stroke-width="1"/><path d="M10.500 11h24.500M10.500 14h24.500M10.500 17h24.500M10.500 20h24.500M10.500 23h24.500M10.500 26h24.500M10.500 29h24.500M10.500 32h24.500M10.500 35h24.500M10.500 38h24.500" stroke="#c0c0c0" stroke-width="1.100"/></svg><span class="dl2" style="left:1338.50px;top:946.00px;transform:scaleX(0.8814);">QHYdrivers...</span>
<span class="dl2" style="left:219.90px;top:945.00px;transform:scaleX(0.8985);">Occult.exe -</span>
<span class="dl2" style="left:228.05px;top:959.00px;transform:scaleX(0.9254);">Shortcut</span>
<span class="dl2" style="left:296.50px;top:945.00px;transform:scaleX(0.8695);">WD Drive</span>
<span class="dl2" style="left:301.00px;top:959.00px;transform:scaleX(0.9232);">Utilities</span>
<span class="dl2" style="left:380.50px;top:945.00px;transform:scaleX(0.8433);">WD</span>
<span class="dl2" style="left:365.50px;top:959.00px;transform:scaleX(0.8849);">Discovery</span>
<span class="dl2" style="left:427.50px;top:945.00px;transform:scaleX(0.8598);">MSRO-XUF...</span>
<span class="dl2" style="left:427.05px;top:959.00px;transform:scaleX(0.8796);">Procedure1...</span>
<span class="dl2" style="left:497.20px;top:945.00px;transform:scaleX(0.8598);">MSRO-XUF...</span>
<span class="dl2" style="left:498.45px;top:959.00px;transform:scaleX(0.8733);">Procedure ...</span>
<span class="dl2" style="left:567.50px;top:945.00px;transform:scaleX(0.8598);">MSRO-XUF...</span>
<span class="dl2" style="left:567.05px;top:959.00px;transform:scaleX(0.8796);">Procedure1...</span>
<span class="dl2" style="left:148.16px;top:945.00px;transform:scaleX(0.8825);">MSRO Log -</span>
<span class="dl2" style="left:145.43px;top:851.00px;transform:scaleX(0.8825);">MSRO Wiki...</span>
<svg style="left:86.0px;top:58.23px" width="45" height="45" viewBox="0 0 45 45"><path d="M4 6l14-3 20 4-4 34-22 0z" fill="#c8d4e0" stroke="#e8eef4"/><path d="M8 10l8 2M10 20l6 1" stroke="#4a8ad0" stroke-width="3"/></svg>
<span class="dl2" style="left:81.25px;top:106.00px;transform:scaleX(0.8531);">Recycle Bin</span>
<svg style="left:86.0px;top:151.5px" width="45" height="45" viewBox="0 0 45 45"><rect x="1.700" y="0.500" width="36" height="31" fill="#0000f0"/><rect x="8" y="2" width="10" height="25" fill="#fff"/><rect x="10.500" y="2" width="3" height="22" fill="#0000f0" opacity="0"/><path d="M2 31q6-4 12 0" stroke="#e00" stroke-width="1.500" fill="none"/><rect x="1.700" y="27" width="11" height="4" fill="#fff"/><g transform="translate(0,32)"><rect x="0" y="0" width="12" height="12" fill="#fff" stroke="#d4d4d4" stroke-width=".6"/><g transform="rotate(-28 6 6)"><path d="M2.200 10.800C2 6.500 3.800 4.800 6.600 4.700V1.800L11.200 6.200L6.600 10.600V7.600C4.600 7.600 3.300 8.600 2.200 10.800z" fill="#2a5db0"/></g></g></svg>
<span class="dl2" style="left:79.50px;top:200.00px;transform:scaleX(0.8215);">SBIGDriver...</span>
<svg style="left:86.0px;top:244.76999999999998px" width="45" height="45" viewBox="0 0 45 45"><rect x="4.500" y="1" width="40" height="42" fill="#0c1850" stroke="#6a6a30"/><circle cx="11.500" cy="26" r="1.600" fill="#ccd"/><g transform="translate(0,32)"><rect x="0" y="0" width="12" height="12" fill="#fff" stroke="#d4d4d4" stroke-width=".6"/><g transform="rotate(-28 6 6)"><path d="M2.200 10.800C2 6.500 3.800 4.800 6.600 4.700V1.800L11.200 6.200L6.600 10.600V7.600C4.600 7.600 3.300 8.600 2.200 10.800z" fill="#2a5db0"/></g></g></svg>
<span class="dl2" style="left:87.00px;top:293.00px;transform:scaleX(0.9686);">Console</span>
<svg style="left:86.0px;top:338.04px" width="45" height="45" viewBox="0 0 45 45"><circle cx="24" cy="20" r="19" fill="#807060"/><ellipse cx="24" cy="16" rx="18" ry="3" fill="#a08060"/><path d="M0 36l18-8 20 4-10 10z" fill="#70b0a0" stroke="#c8b890" stroke-width="2"/><g transform="translate(0,32)"><rect x="0" y="0" width="12" height="12" fill="#fff" stroke="#d4d4d4" stroke-width=".6"/><g transform="rotate(-28 6 6)"><path d="M2.200 10.800C2 6.500 3.800 4.800 6.600 4.700V1.800L11.200 6.200L6.600 10.600V7.600C4.600 7.600 3.300 8.600 2.200 10.800z" fill="#2a5db0"/></g></g></svg>
<span class="dl2" style="left:77.00px;top:386.00px;transform:scaleX(0.8437);">SharpCap 3.2</span>
<svg style="left:86.0px;top:431.31px" width="45" height="45" viewBox="0 0 45 45"><rect x="4" y="0" width="30" height="44" fill="#e8e8e8" stroke="#999"/><path d="M9 4v36" stroke="#888" stroke-dasharray="1 2" stroke-width="2"/></svg>
<span class="dl2" style="left:77.50px;top:480.00px;transform:scaleX(0.8381);">RSpec-Expl...</span>
<svg style="left:86.0px;top:524.5799999999999px" width="45" height="45" viewBox="0 0 45 45"><path d="M2 6q8-6 14 2l-2 10q-8 2-12-4z" fill="#a0a8e0" stroke="#dde"/><ellipse cx="6" cy="10" rx="4" ry="5" fill="#3040a0"/><path d="M10 18q4 10 2 26" stroke="#8088c8" stroke-width="5" fill="none"/><g transform="translate(0,32)"><rect x="0" y="0" width="12" height="12" fill="#fff" stroke="#d4d4d4" stroke-width=".6"/><g transform="rotate(-28 6 6)"><path d="M2.200 10.800C2 6.500 3.800 4.800 6.600 4.700V1.800L11.200 6.200L6.600 10.600V7.600C4.600 7.600 3.300 8.600 2.200 10.800z" fill="#2a5db0"/></g></g></svg>
<span class="dl2" style="left:90.70px;top:573.00px;transform:scaleX(0.8023);">ASCOM</span>
<div style="left:320px;top:58px;width:12px;height:3px;background:#8c8c8c;border-top:1.200px solid #1c1c1c;"></div>
<div style="left:1469px;top:54px;width:119px;height:56px;background:#000;border:1px solid #2e2e2e;"></div>
<div style="left:1469px;top:54.5px;width:118.5px;height:23.5px;background:#fff;"></div>
<span class="t" style="left:1472.60px;top:60.00px;font-size:12.6px;color:#a8a8a8;transform:scaleX(0.8005);transform-origin:0 50%;">LMST</span>
<span class="t mono" style="left:1470.2px;top:82px;font-size:25.8px;color:#b4ffff;letter-spacing:-1.22px;">05:34:16</span>
<div style="left:1593px;top:52px;width:252px;height:44.5px;background:#000;border:1px solid #e6e61e;"></div>
<div style="left:1594px;top:53px;width:250px;height:18.3px;background:#3a2d4a;"></div>
<span class="t utc1" style="left:1594.6px;top:54px;">UNIVERSAL COORDINATED TIME &lt;UTC&gt;</span>
<span class="t utc1" style="left:1630.8px;top:63px;">YEAR</span>
<span class="t utc1" style="left:1674.4px;top:63px;">MONTH</span>
<span class="t utc1" style="left:1715.5px;top:63px;">DAY</span>
<span class="t utc1" style="left:1747.3px;top:63px;">HOUR</span>
<span class="t utc1" style="left:1785.5px;top:63px;">MIN</span>
<span class="t utc1" style="left:1820.8px;top:63px;">SEC</span>
<span class="t utcd" style="left:1616.3px;top:69.5px;">2019</span>
<span class="t utcd" style="left:1677.2px;top:69.5px;">09</span>
<span class="t utcd" style="left:1712.8px;top:69.5px;">24</span>
<span class="t utcd" style="left:1747.2px;top:69.5px;">10</span>
<span class="t utcd" style="left:1783.8px;top:69.5px;">33</span>
<span class="t utcd" style="left:1817.5px;top:69.5px;">13</span>
<span class="t mono" style="left:1774.2px;top:73px;font-size:14px;color:#7ff4f4;font-weight:bold;">:</span>
<span class="t mono" style="left:1809px;top:73px;font-size:14px;color:#7ff4f4;font-weight:bold;">:</span>
<div style="left:76.6px;top:637.5px;width:124.500px;height:350px;background:#000;border:1px solid #2b2b2b;overflow:hidden;">
<div style="left:0.0px;top:-0.5px;width:123px;height:23px;background:#fff;"></div>
<svg style="left:2.4000000000000057px;top:2.5px" width="16" height="16" viewBox="0 0 16 16"><rect width="15" height="15" fill="#000"/><ellipse cx="7.500" cy="8" rx="6" ry="2" fill="none" stroke="#b89870" stroke-width="1.200"/><ellipse cx="7.500" cy="7.800" rx="3" ry="2.300" fill="#dcb890"/></svg>
<svg style="left:16.400000000000006px;top:2.5px" width="100" height="16" viewBox="94 641 100 16"><path d="M94 649.500h6" stroke="#b4b4b4"/><rect x="132.500" y="645.500" width="8" height="8" fill="none" stroke="#e2e2e2"/><path d="M174.500 645l9.500 9.500M184 645l-9.500 9.500" stroke="#9a9a9a" stroke-width="1"/></svg>
<svg style="left:22.400000000000006px;top:23.5px" width="80" height="40" viewBox="100 662 80 40">
<defs><radialGradient id="sat" cx=".45" cy=".45" r=".6"><stop offset="0" stop-color="#f0d0a4"/><stop offset=".7" stop-color="#d4ac80"/><stop offset="1" stop-color="#8a6a4a"/></radialGradient><filter id="sb"><feGaussianBlur stdDeviation=".7"/></filter></defs>
<g filter="url(#sb)"><ellipse cx="139" cy="682" rx="29" ry="9.500" fill="none" stroke="#b49878" stroke-width="5.500" transform="rotate(6 139 682)"/><ellipse cx="139" cy="682" rx="23.500" ry="6.300" fill="#04080c" transform="rotate(6 139 682)"/>
<ellipse cx="139" cy="681.500" rx="14" ry="12.300" fill="url(#sat)"/>
<path d="M112 684q27 14 54 2" fill="none" stroke="#c4a480" stroke-width="4.500"/><path d="M117 683.500q22 9 45 1" fill="none" stroke="#2a2218" stroke-width="1.200"/></g>
</svg>
<span class="t" style="left:11.20px;top:66.50px;font-size:11.3px;color:#fff;transform:scaleX(0.8492);transform-origin:0 50%;">LST</span>
<span class="t" style="left:47.46px;top:65.50px;font-size:11.6px;color:#ff0a0a;font-weight:bold;font-family:'Liberation Mono',monospace;letter-spacing:1.219px;">05:34:17</span>
<span class="t" style="left:11.20px;top:84.50px;font-size:11.3px;color:#fff;transform:scaleX(0.9046);transform-origin:0 50%;">HA</span>
<span class="t" style="left:39.28px;top:84.50px;font-size:11.6px;color:#ff0a0a;font-weight:bold;font-family:'Liberation Mono',monospace;letter-spacing:1.219px;">—02:40:37</span>
<span class="t" style="left:11.20px;top:102.50px;font-size:11.3px;color:#fff;transform:scaleX(0.8907);transform-origin:0 50%;">Dec</span>
<span class="t" style="left:39.28px;top:102.50px;font-size:11.6px;color:#ff0a0a;font-weight:bold;font-family:'Liberation Mono',monospace;letter-spacing:1.219px;">+21:01:43</span>
<span class="t" style="left:11.20px;top:121.50px;font-size:11.3px;color:#fff;transform:scaleX(0.8114);transform-origin:0 50%;">Az</span>
<span class="t" style="left:39.28px;top:121.50px;font-size:11.6px;color:#ff0a0a;font-weight:bold;font-family:'Liberation Mono',monospace;letter-spacing:1.219px;">104:58:19</span>
<span class="t" style="left:11.20px;top:139.50px;font-size:11.3px;color:#fff;transform:scaleX(0.7962);transform-origin:0 50%;">Alt</span>
<span class="t" style="left:47.46px;top:139.50px;font-size:11.6px;color:#ff0a0a;font-weight:bold;font-family:'Liberation Mono',monospace;letter-spacing:1.219px;">51:27:21</span>
<div style="left:11.4px;top:162.5px;width:12px;height:12px;background:#fff;border:1px solid #8a8a8a;box-shadow:inset 1px 1px 0 #c8c8c8;"></div>
<span class="t" style="left:28.20px;top:157.50px;font-size:11.3px;color:#fff;transform:scaleX(0.8590);transform-origin:0 50%;">Quiet</span>
<span class="t" style="left:28.20px;top:168.50px;font-size:11.3px;color:#fff;transform:scaleX(0.8895);transform-origin:0 50%;">Scope</span>
<div style="left:70.4px;top:162.5px;width:12px;height:12px;background:#fff;border:1px solid #8a8a8a;box-shadow:inset 1px 1px 0 #c8c8c8;"></div>
<svg style="left:70.4px;top:162.5px" width="12" height="12" viewBox="0 0 12 12"><path d="M2.800 5.500l2.300 2.600 4.200-5" fill="none" stroke="#000" stroke-width="1.700"/></svg>
<span class="t" style="left:87.40px;top:163.50px;font-size:11.3px;color:#fff;transform:scaleX(0.9054);transform-origin:0 50%;">Track</span>
<div class="btn" style="left:7.4px;top:188.2px;width:61.7px;height:27.3px;"></div><span class="t" style="left:13.10px;top:190.50px;font-size:11.3px;color:#000;transform:scaleX(0.8998);transform-origin:0 50%;">Disconnect</span><span class="t" style="left:23.70px;top:202.50px;font-size:11.3px;color:#000;transform:scaleX(0.9082);transform-origin:0 50%;">Scope</span>
<div class="btn" style="left:72.1px;top:188.2px;width:43px;height:27.3px;"></div><span class="t" style="left:83.45px;top:190.50px;font-size:11.3px;color:#000;transform:scaleX(0.8737);transform-origin:0 50%;">Park</span><span class="t" style="left:79.30px;top:202.50px;font-size:11.3px;color:#000;transform:scaleX(0.8926);transform-origin:0 50%;">Scope</span>
<div class="btn" style="left:7.4px;top:221.5px;width:61.7px;height:19.8px;"></div><span class="t" style="left:24.65px;top:226.50px;font-size:11.3px;color:#000;transform:scaleX(0.8841);transform-origin:0 50%;">Traffic</span>
<div class="btn" style="left:72.1px;top:221.5px;width:43px;height:19.8px;"></div><span class="t" style="left:80.75px;top:226.50px;font-size:11.3px;color:#000;transform:scaleX(0.8703);transform-origin:0 50%;">Setup</span>
<div style="left:7.4px;top:254.5px;width:42px;height:19.5px;background:#fff;border:1px solid;border-color:#7a7a7a #e8e8e8 #e8e8e8 #7a7a7a;box-shadow:inset 1px 1px 0 #3a3a3a;"></div>
<span class="t" style="left:11.30px;top:259.50px;font-size:11.3px;color:#000;transform:scaleX(0.9370);transform-origin:0 50%;">30'</span>
<div class="btn" style="left:31.4px;top:256.5px;width:16px;height:16px;"></div>
<svg style="left:34.400000000000006px;top:261.5px" width="10" height="6" viewBox="0 0 10 6"><path d="M1.500 1h7L5 4.800z" fill="#000"/></svg>
<div class="btn" style="left:55.4px;top:254.5px;width:25.7px;height:23.8px;"></div><span class="t" style="left:64.20px;top:261.50px;font-size:11.3px;color:#000;transform:scaleX(0.9926);transform-origin:0 50%;font-weight:bold;">N</span>
<svg style="left:21.400000000000006px;top:275.5px" width="10" height="10" viewBox="0 0 10 10"><circle cx="4.500" cy="5" r="3.600" fill="#10e010"/></svg>
<div class="btn" style="left:22.3px;top:285.7px;width:25.6px;height:23.9px;"></div><span class="t" style="left:29.30px;top:292.50px;font-size:11.3px;color:#000;transform:scaleX(1.0876);transform-origin:0 50%;font-weight:bold;">W</span>
<div class="btn" style="left:51.4px;top:284.2px;width:33.5px;height:26.9px;"></div>
<svg style="left:57.400000000000006px;top:286.5px" width="22" height="22" viewBox="0 0 22 22"><path d="M3 1.500v6.500l5 5.500h3.500v3.500l6-6-6-6v3.500h-2.500v-7l-2.500 3.500z" fill="#f4f4f4" stroke="#1a1a4a" stroke-width="1.200"/></svg>
<div class="btn" style="left:88.4px;top:285.7px;width:25.7px;height:23.9px;"></div><span class="t" style="left:97.80px;top:292.50px;font-size:11.3px;color:#000;transform:scaleX(0.9154);transform-origin:0 50%;font-weight:bold;">E</span>
<div class="btn" style="left:7.4px;top:320.8px;width:41.5px;height:20.4px;"></div><span class="t" style="left:20.80px;top:326.50px;font-size:11.3px;color:#000;transform:scaleX(0.8073);transform-origin:0 50%;">Flip</span>
<div class="btn" style="left:55.4px;top:317.4px;width:25.7px;height:23.8px;"></div><span class="t" style="left:64.70px;top:324.50px;font-size:11.3px;color:#000;transform:scaleX(0.9420);transform-origin:0 50%;font-weight:bold;">S</span>
</div>
<div class="win" style="left:99px;top:61px;width:989px;height:581px;background:#f0f0f0;overflow:hidden;">
<div style="left:0px;top:0px;width:989px;height:48.5px;background:#fff;"></div>
<div style="left:0px;top:48px;width:989px;height:1px;background:#b0b0b0;"></div>
<svg style="left:7px;top:5.5px" width="15" height="15" viewBox="0 0 15 15"><defs><linearGradient id="ci" x1="0" y1="0" x2="1" y2="1"><stop offset="0" stop-color="#444"/><stop offset=".6" stop-color="#8a8a8a"/><stop offset="1" stop-color="#c8c8c8"/></linearGradient></defs><rect width="15" height="15" fill="url(#ci)"/><path d="M0 12.500l5-.5 4 1 6 .5V15H0z" fill="#000"/><path d="M4 9L12.500 1l1.500 1L4.500 9.500z" fill="#f4f4f4"/></svg>
<span class="t" style="left:27.00px;top:9.00px;font-size:11.4px;color:#a2a2a2;letter-spacing:-0.393px;">Cartes du Ciel - Chart_1</span>
<svg style="left:871px;top:1px" width="118" height="26" viewBox="970 62 118 26"><path d="M978 74.500h9.500" stroke="#8a8a8a" stroke-width="1"/><rect x="1020.500" y="69.500" width="9" height="9" fill="none" stroke="#8a8a8a" stroke-width="1"/><path d="M1062.500 69.500l9.500 9.500M1072 69.500l-9.500 9.500" stroke="#8a8a8a" stroke-width="1"/></svg>
<span class="t" style="left:6.70px;top:32.00px;font-size:11.4px;color:#000;letter-spacing:-0.518px;">File</span>
<span class="t" style="left:36.40px;top:32.00px;font-size:11.4px;color:#000;letter-spacing:-0.386px;">Edit</span>
<span class="t" style="left:67.00px;top:32.00px;font-size:11.4px;color:#000;letter-spacing:-0.358px;">Setup</span>
<span class="t" style="left:108.00px;top:32.00px;font-size:11.4px;color:#000;letter-spacing:-0.376px;">View</span>
<span class="t" style="left:144.00px;top:32.00px;font-size:11.4px;color:#000;letter-spacing:-0.255px;">Chart</span>
<span class="t" style="left:183.80px;top:32.00px;font-size:11.4px;color:#000;letter-spacing:-0.515px;">Telescope</span>
<span class="t" style="left:243.50px;top:32.00px;font-size:11.4px;color:#000;letter-spacing:-0.008px;">Window</span>
<span class="t" style="left:297.30px;top:32.00px;font-size:11.4px;color:#000;letter-spacing:-0.294px;">Update</span>
<span class="t" style="left:345.30px;top:32.00px;font-size:11.4px;color:#000;letter-spacing:-0.237px;">Help</span>
<svg style="left:0;top:0" width="130" height="420" viewBox="99 61 130 420">
<path d="M99 139h130M99 166.500h130" stroke="#c4c4c4" stroke-width="1"/>
<g fill="none" stroke="#4a4a4a" stroke-width="1.300">
<path d="M106.500 117.500h12v10l-3.500 3.500h-8.500z"/><path d="M118.500 127.500h-3.500v3.500" stroke-width="1"/>
<path d="M131.500 131v-13h6l1.500 2h6.500v11z"/><path d="M131.500 118h6l1.500 2.500h-7.500z" fill="#4a4a4a"/>
<path d="M156.500 131v-13h9l3 3v4M156.500 131h6"/><path d="M159 118v4h6v-4M159 131v-5h5" stroke-width="1.100"/><path d="M165 130.500l6-6 1.500 1.500-6 6-2 .5z" stroke-width="1"/>
<path d="M185.500 121.500v-4.500h9v4.500M186.500 119h7"/><rect x="183.500" y="121.500" width="13.500" height="6.500" rx="1"/><path d="M186 125h8.500" stroke-width="1.600"/><path d="M186.500 127v3.500h7.500v-3.500" fill="#f0f0f0"/>
</g>
<path d="M211.500 121.500a4.600 4.600 0 0 1 9.200 0q0 3-2.200 6.500h-4.800q-2.200-3.500-2.200-6.500z" fill="#dc3c50"/><rect x="213.800" y="128.200" width="4.600" height="2.400" rx="1" fill="#444"/>
<rect x="100.500" y="141" width="25.500" height="24" fill="#c5e0f7" stroke="#9ccdf8" stroke-width="1"/><rect x="126" y="141" width="26" height="24" fill="#c5e0f7" stroke="#9ccdf8" stroke-width="1"/><rect x="152" y="141" width="25.500" height="24" fill="#c5e0f7" stroke="#9ccdf8" stroke-width="1"/>
<g fill="none" stroke="#4a4a4a" stroke-width="1.300">
<path d="M112.500 146.500l2 4.500 5 .6-3.700 3.300 1 4.900-4.300-2.500-4.300 2.500 1-4.900-3.700-3.300 5-.6z" stroke-width="1.100"/>
<circle cx="138.500" cy="153.500" r="3.200" fill="#4a4a4a"/><path d="M132 153a6.500 6.500 0 0 1 10-5.500M145 154a6.500 6.500 0 0 1-10 5.500"/>
<path d="M158 153l4-5.500q5-1.500 7 3.500v9h-5.500v-8.500l-2.500 2.500"/>
<rect x="183.500" y="146.500" width="14" height="14"/><path d="M183.500 158l4.500-4.500 3 3 3-4.500 3.500 5v3.500h-14z" fill="#4a4a4a"/><circle cx="187.500" cy="150.500" r="1.300" fill="#4a4a4a"/>
</g>
<rect x="100.500" y="246.500" width="25.500" height="24" fill="#c5e0f7" stroke="#9ccdf8" stroke-width="1"/>
<g fill="none" stroke="#4a4a4a" stroke-width="1.200">
<circle cx="112.500" cy="181" r="7"/><path d="M108 177q3-3 6-1l-1 3-3 1 1 3 3 1-1 3M117 178l2 2-1 4-2 2" fill="#4a4a4a" stroke-width=".6"/>
<circle cx="112.500" cy="207" r="7"/><path d="M112.500 202.500v5h4"/>
<rect x="105.500" y="226.500" width="14" height="13"/><path d="M105.500 229.500h14" stroke-width="2"/><rect x="107.500" y="231.500" width="4" height="6" fill="#4a4a4a"/><path d="M113.500 232.500h4.500M113.500 235h3" stroke-width="1"/>
</g>
<g fill="none" stroke="#4a4a4a" stroke-width="1.100">
<g id="net"><path d="M104.300 250.600L110.500 256.500M111.500 250.200L106 257M110.800 250.600L120.600 255.600M118.300 250.300L116 256.300M104.600 255L105.500 259.500L107.800 262.500L104.500 265.300" stroke-width="1.200"/></g>
<use href="#net" y="26"/><use href="#net" y="52"/><use href="#net" y="78"/>
<path d="M112.500 354v16"/><path d="M110 357l-5 5 5 5zM115 357l5 5-5 5z" stroke-width="1"/>
<path d="M104.500 387.500h16"/><path d="M108 385l4.500-4.500 4.500 4.500zM108 390l4.500 4.500 4.500-4.500z" stroke-width="1"/>
<path d="M110 408l3.500 1.500-1.500 3M110 408l3.500-2" stroke-width="1"/><path d="M107 411q-3 3-1 8" stroke-dasharray="1 1.500" stroke-width="1"/><path d="M116 412l4 4.500-4.500 4.500-4-4.500z"/>
<path d="M117 434l-3.500 1.500 1.500 3M117 434l-3.500-2" stroke-width="1"/><path d="M118 435q4 3 1 8l-4 1" stroke-dasharray="1 1.500" stroke-width="1"/><path d="M109 438l4 4.500-4.500 4.500-4-4.500z"/>
<circle cx="112.500" cy="465" r="6" stroke-dasharray="1 1.800" stroke-width="1"/><path d="M115 459.500l-3.500 1.500M111.500 461l2 2.500M111.500 461h4M110 470.500l3.500-1.500M113.500 469l-2-2.500M113.500 469h-4" stroke-width="1"/>
</g>
</svg>
<span class="t" style="left:10.30px;top:197.00px;font-size:10.4px;color:#3c3c3c;font-weight:bold;letter-spacing:-0.645px;">Eq</span>
<span class="t" style="left:10.30px;top:223.00px;font-size:10.4px;color:#3c3c3c;font-weight:bold;letter-spacing:-0.355px;">Az</span>
<span class="t" style="left:10.30px;top:249.00px;font-size:10.4px;color:#3c3c3c;font-weight:bold;letter-spacing:-0.361px;">Ec</span>
<span class="t" style="left:10.30px;top:275.00px;font-size:10.4px;color:#3c3c3c;font-weight:bold;letter-spacing:0.511px;">Gl</span>
<span class="t" style="left:110.30px;top:87.00px;font-size:11.8px;color:#4a4a4a;">VO</span>
<div style="left:29px;top:107px;width:100px;height:429.5px;background:#00001f;"></div>
<svg style="left:29px;top:107px" width="100" height="430" viewBox="128 168 100 430">
<defs><radialGradient id="hub"><stop offset="0" stop-color="#e0e0e0"/><stop offset="1" stop-color="#999"/></radialGradient>
<linearGradient id="ring" x1="0" y1="0" x2="1" y2="1"><stop offset="0" stop-color="#8a8a8a"/><stop offset=".5" stop-color="#4a4a4a"/><stop offset="1" stop-color="#7a7a7a"/></linearGradient></defs>
<path d="M167 168L164.800 598" stroke="#55554e" stroke-width="1"/>
<path d="M128 391.500h15M183 391.500h45M128 568.500h15M183 568.500h45" stroke="#55554a" stroke-width="1"/>
<circle cx="148.500" cy="336.600" r="1.200" fill="#e0d890"/><circle cx="139.400" cy="349.300" r="1.600" fill="#f0ecc0"/><circle cx="136.300" cy="445.200" r="1.400" fill="#e8e0b0"/>
<circle cx="152.200" cy="375.800" r=".8" fill="#555"/><circle cx="154" cy="286.500" r="1" fill="#6a6a5a"/><circle cx="208" cy="575.500" r=".9" fill="#aaa"/><circle cx="163.500" cy="594.800" r=".8" fill="#aaa"/>
</svg>
<div style="left:29.400000000000006px;top:107.19999999999999px;width:100px;height:102.8px;background:#1c1c1e;"></div>
<svg style="left:29px;top:107px" width="100" height="110" viewBox="128 168 100 110"><path d="M166.500 168v103" stroke="#2c2c2c"/><circle cx="140.800" cy="258.500" r="4.200" fill="#5a1818"/></svg>
<span class="t" style="left:34.40px;top:113.00px;font-size:12.7px;color:#fff;transform:scaleX(0.8363);transform-origin:0 50%;">Equatorial coord.</span>
<span class="t" style="left:34.40px;top:128.00px;font-size:12.7px;color:#fff;transform:scaleX(0.8517);transform-origin:0 50%;">Apparent</span>
<span class="t" style="left:34.40px;top:143.00px;font-size:12.7px;color:#fff;transform:scaleX(0.8312);transform-origin:0 50%;">2019-09-24</span>
<span class="t" style="left:34.40px;top:158.00px;font-size:12.7px;color:#fff;transform:scaleX(0.8336);transform-origin:0 50%;">06h33m12s (EDT)</span>
<span class="t" style="left:34.40px;top:173.00px;font-size:12.7px;color:#fff;transform:scaleX(0.8281);transform-origin:0 50%;">Mag:12.5,1.0'</span>
<span class="t" style="left:34.40px;top:187.00px;font-size:12.7px;color:#fff;transform:scaleX(0.8343);transform-origin:0 50%;">FOV:+02°35'39"</span>
<span class="t" style="left:44.70px;top:317.00px;font-size:12.7px;color:#c8c8c8;transform:scaleX(0.8130);transform-origin:0 50%;">+21°00'</span>
<span class="t" style="left:50.50px;top:494.00px;font-size:12.7px;color:#c8c8c8;transform:scaleX(0.8809);transform-origin:0 50%;">20°30'</span>
<span class="t" style="left:49.30px;top:518.00px;font-size:12.7px;color:#c8c8c8;transform:scaleX(0.8292);transform-origin:0 50%;">8h20m</span>
<span class="t" style="left:86.50px;top:512.00px;font-size:12.7px;color:#c8c8c8;transform:scaleX(0.8495);transform-origin:0 50%;">08</span>
<svg style="left:29px;top:439px" width="100" height="100" viewBox="128 500 100 100">
<ellipse cx="136.800" cy="583.500" rx="4.200" ry="6.200" fill="#b80000" transform="rotate(12 136.800 583.500)"/>
<circle cx="174.200" cy="550.500" r="31" fill="none" stroke="url(#ring)" stroke-width="4.500"/>
<circle cx="174.200" cy="550.500" r="31" fill="none" stroke="#b0b0b0" stroke-width="1" stroke-dasharray="2 14"/>
<path d="M174.200 550.500l-36.500 0 36.500-4.500 36.500 4.500-36.500 4.500z" fill="#8a8a8a"/><path d="M137.700 550.500l36.500-4.500 36.500 4.500z" fill="#a6a6a6"/>
<path d="M174.200 513l5.500 37.500h-11z" fill="#e02020"/><path d="M174.200 513l5.500 37.500h-5.500z" fill="#ff3a3a"/>
<path d="M174.200 592l5.500-41.500h-11z" fill="#3a50b8"/><path d="M174.200 592l5.500-41.500h-5.500z" fill="#5068d0"/>
<circle cx="174.200" cy="550.500" r="5.200" fill="url(#hub)"/>
</svg>
<span class="t" style="left:71.80000000000001px;top:459.5px;font-size:9.5px;color:#eee;font-weight:bold;">N</span>
<span class="t" style="left:48.5px;top:484.79999999999995px;font-size:8.5px;color:#ddd;font-weight:bold;transform:rotate(90deg);">E</span>
<div style="left:0px;top:536.5px;width:130px;height:44.5px;background:#f0f0f0;"></div>
<svg style="left:33px;top:539px" width="8" height="8" viewBox="0 0 8 8"><path d="M6 0.500L2 4l4 3.500" fill="none" stroke="#222" stroke-width="1.600"/></svg>
<span class="t" style="left:0.60px;top:552.00px;font-size:11.4px;color:#000;letter-spacing:-0.900px;">RA: 08h12m19.62s DE:+21°0</span>
<span class="t" style="left:0.60px;top:566.00px;font-size:11.4px;color:#000;letter-spacing:-0.288px;">Az:+104°01'46.8" Alt:+49°</span>
</div>
<div class="win" style="left:218.75px;top:108.75px;width:1067px;height:840.25px;background:#f0f0f0;overflow:hidden;">
<div style="left:0.0px;top:0.0px;width:1067px;height:28.5px;background:#fff;"></div>
<div style="left:0.0px;top:28.45px;width:1067px;height:1px;background:#c4c4c4;"></div>
<svg style="left:6.25px;top:5.25px" width="18" height="18" viewBox="225 114 18 18" ><defs><linearGradient id="mrb" x1="0" x2="1"><stop offset="0" stop-color="#e01010"/><stop offset=".25" stop-color="#f0a000"/><stop offset=".45" stop-color="#e8e800"/><stop offset=".62" stop-color="#20b020"/><stop offset=".8" stop-color="#2030d0"/><stop offset="1" stop-color="#500080"/></linearGradient></defs><circle cx="233.4" cy="122.9" r="6.3" fill="#000"/><circle cx="233.4" cy="122.9" r="5.199999999999999" fill="#0a48e8"/><rect x="229.746" y="120.06500000000001" width="7.307999999999999" height="5.984999999999999" fill="url(#mrb)"/></svg>
<span class="t" style="left:26.95px;top:9.25px;font-size:11.5px;color:#a0a0a0;letter-spacing:-0.240px;">MaxIm DL Pro 6 - WaningCrescentMoon1-0311.fit</span>
<svg style="left:951.25px;top:3.25px" width="110" height="20" viewBox="1170 112 110 20" ><path d="M1176 122.500h9.500" stroke="#8a8a8a"/><rect x="1217.500" y="117.500" width="9" height="9" fill="none" stroke="#8a8a8a"/><path d="M1260.500 117.500l9.500 9.500M1270 117.500l-9.500 9.500" stroke="#8a8a8a" fill="none"/></svg>
<svg style="left:0.00px;top:28.25px" width="400" height="76" viewBox="218.75 137 400 76" ><g transform="translate(0,-0.5)"><path d="M275.500 141v18M325.500 141v18M438.500 141v18M549.500 141v18M254.500 190v19" stroke="#c0c0c0" stroke-width="1"/><path d="M223 143v16M223 168v16M223 192v17" stroke="#b8b8b8" stroke-width="2.600" stroke-dasharray="0.900 1.100"/><rect x="329.25" y="140.500" width="19.0" height="18" fill="#cce4f7" stroke="#2a8ae0" stroke-width="1.200"/><rect x="371.75" y="140.500" width="18.5" height="18" fill="#cce4f7" stroke="#2a8ae0" stroke-width="1.200"/><rect x="392.5" y="140.500" width="19.5" height="18" fill="#cce4f7" stroke="#2a8ae0" stroke-width="1.200"/><path d="M232.500 155v-9.500h4l1.500 1.500h5v2" fill="#f0e890" stroke="#6a6000" stroke-width="1"/><path d="M232.500 155l3-6h11l-3 6z" fill="#e8d860" stroke="#6a6000" stroke-width="1"/><path d="M240 143.500q3-2 5 .5l1.500-1.500v3.500h-3.500" fill="none" stroke="#333" stroke-width=".9"/><rect x="254.500" y="143.500" width="12" height="12" fill="#9a8a10" stroke="#3a3a00"/><rect x="257" y="144" width="7" height="4.500" fill="#f4f4f4"/><rect x="257" y="151" width="7" height="4.500" fill="#444"/><rect x="262" y="152" width="1.500" height="3" fill="#ddd"/><g fill="none" stroke="#b0b0b0" stroke-width="1.200"><path d="M284 152q-1-7 5-7.500q6 0 7 7"/><path d="M282 148.500l2 3.500 3-2.500M282 155.500h8"/><path d="M315 152q1-7-5-7.500q-6 0-7 7"/><path d="M317 148.500l-2 3.500-3-2.500M309 155.500h8"/></g><rect x="331.500" y="143" width="14.500" height="13" fill="#222" stroke="#000"/><path d="M333 154.500l2.500-5 2 2.500 2-1.500 2 2 2 .5v1.500z" fill="#f4f4f4"/><path d="M333 155h12" stroke="#e03030"/><rect x="353" y="143" width="14" height="13" fill="#333" stroke="#000"/><circle cx="360" cy="149.500" r="4" fill="none" stroke="#fff" stroke-width="1.200"/><path d="M354 149.500h12M360 144v11" stroke="#fff" stroke-width="1"/><path d="M380 143.500v13M382.500 143.500v13" stroke="#333" stroke-width="1.200"/><path d="M374 153l5-7h3M383 146.500q4 0 4 3.500t-4 3.500" fill="none" stroke="#555" stroke-width="1.100"/><path d="M384 147.500h2v5h-2z" fill="#20a0a0"/><path d="M397.500 156v-7.500a4.800 4.800 0 0 1 9.500 0V156z" fill="#fff" stroke="#333" stroke-width="1.100"/><path d="M400.500 148.500h3.500v3h-3.500z" fill="#e03030"/><path d="M402.200 143v3" stroke="#e03030"/><rect x="417.500" y="145.500" width="9" height="10" fill="#fff" stroke="#333"/><rect x="417.500" y="145.500" width="9" height="3.500" fill="#3a3ac0"/><path d="M424 149l4-4.500 3 1.500-3 5z" fill="#e8e8e8" stroke="#555" stroke-width=".8"/><path d="M427 143.500l3.500-1.500" stroke="#333"/><path d="M454.5 152.500l5 5" stroke="#111" stroke-width="2.200"/><circle cx="451.0" cy="148.500" r="4.800" fill="#d8f4f4" stroke="#10a0a0" stroke-width="1.500"/><path d="M448.500 148.500h5M451 146v5" stroke="#111" stroke-width="1.300"/><path d="M476 152.500l5 5" stroke="#111" stroke-width="2.200"/><circle cx="472.5" cy="148.500" r="4.800" fill="#d8f4f4" stroke="#10a0a0" stroke-width="1.500"/><path d="M470 148.500h5" stroke="#111" stroke-width="1.300"/><rect x="486.500" y="141" width="56" height="17.500" fill="#fff" stroke="#7a7a7a" stroke-width="1"/><path d="M486.500 158.500v-17.500h56" fill="none" stroke="#5a5a5a" stroke-width="1.200"/><rect x="527" y="142.500" width="14.500" height="15" fill="#f0f0f0" stroke="#a0a0a0" stroke-width=".8"/><path d="M530.800 148.500h7l-3.500 4z" fill="#000"/><path d="M557 143v11l2.500-2.500 2 4.500 1.800-.8-2-4.300h3.500z" fill="#111"/><path d="M236 204l8-9" stroke="#222" stroke-width="1.300"/><path d="M243.500 194l2.500 2.500" stroke="#222" stroke-width="1.600"/><path d="M234 201l4 5M238 201l-4 5M233 203.500h6M236 200.500v6" stroke="#e8e020" stroke-width=".9"/><ellipse cx="267.500" cy="199" rx="6" ry="5" fill="#fff" stroke="#222" stroke-width="1"/><path d="M263.500 203h8l-1.500 2h-5z" fill="#2a3ae0"/><path d="M264 197l3 2.500M267 196l1.500 2" stroke="#888" stroke-width=".7"/><ellipse cx="290.500" cy="200" rx="6" ry="5" fill="#fff" stroke="#222" stroke-width="1"/><path d="M286.500 204h8l-1.500 2h-5z" fill="#2a3ae0"/><path d="M282 195h3l1 1.500h4v4h-8z" fill="#f0e060" stroke="#8a7a00" stroke-width=".7"/><path d="M303 199h14M310 192v14" stroke="#7ac0c0" stroke-width="1"/><path d="M310 196l3 3-3 3-3-3z" fill="#e02020"/></g></svg>
<span class="t" style="left:271.75px;top:36.25px;font-size:11.9px;color:#000;letter-spacing:0.152px;">20.3%</span>
<span class="t" style="left:345.75px;top:34.25px;font-size:12.5px;color:#2020c0;font-weight:bold;">?</span>
<span class="t" style="left:18.25px;top:60.25px;font-size:11.4px;letter-spacing:-0.718px;"><span class="mu" style="position:static">F</span>ile</span>
<span class="t" style="left:48.00px;top:60.25px;font-size:11.4px;letter-spacing:-0.099px;"><span class="mu" style="position:static">E</span>dit</span>
<span class="t" style="left:81.25px;top:60.25px;font-size:11.4px;letter-spacing:-0.001px;"><span class="mu" style="position:static">V</span>iew</span>
<span class="t" style="left:120.00px;top:60.25px;font-size:11.4px;letter-spacing:-0.437px;"><span class="mu" style="position:static">A</span>nalyze</span>
<span class="t" style="left:171.25px;top:60.25px;font-size:11.4px;letter-spacing:-0.383px;"><span class="mu" style="position:static">P</span>rocess</span>
<span class="t" style="left:223.25px;top:60.25px;font-size:11.4px;letter-spacing:-0.222px;">Fil<span class="mu" style="position:static">t</span>er</span>
<span class="t" style="left:261.25px;top:60.25px;font-size:11.4px;letter-spacing:-0.449px;"><span class="mu" style="position:static">C</span>olor</span>
<span class="t" style="left:299.50px;top:60.25px;font-size:11.4px;letter-spacing:-0.320px;">Plu<span class="mu" style="position:static">g</span>-in</span>
<span class="t" style="left:346.75px;top:60.25px;font-size:11.4px;letter-spacing:0.159px;"><span class="mu" style="position:static">W</span>indow</span>
<span class="t" style="left:402.00px;top:60.25px;font-size:11.4px;letter-spacing:-0.299px;"><span class="mu" style="position:static">H</span>elp</span>
<div style="left:0.0px;top:103.55px;width:1067px;height:1px;background:#c8c8c8;"></div>
<div style="left:1.25px;top:104.55px;width:1064px;height:16.4px;background:#f9f9f9;"></div>
<span class="t" style="left:8.75px;top:108.25px;font-size:11.5px;color:#000;letter-spacing:-0.034px;">WaningCrescentMoon1-0311.fit</span>
<div style="left:173.55px;top:107.25px;width:1px;height:13px;background:#000;"></div>
<div style="left:3.75px;top:126.25px;width:1059.5px;height:692.8px;background:#ababab;border:1px solid;border-color:#5a5a5a #fff #fff #6a6a6a;border-top-width:1.500px;"></div>
<div style="left:4.95px;top:127.75px;width:905.5px;height:690.5px;background:#d7e4f2;border:1px solid;border-color:#5a5a5a #8a9ab0 #8a9ab0 #8a9ab0;border-radius:5px 5px 0 0;"></div>
<div style="left:5.95px;top:128.75px;width:903.5px;height:28.8px;background:linear-gradient(#b9cbe0,#d0deee 55%,#dbe6f4);border-radius:4px 4px 0 0;"></div>
<svg style="left:13.25px;top:137.25px" width="18" height="18" viewBox="232 246 18 18" ><defs><linearGradient id="mrb" x1="0" x2="1"><stop offset="0" stop-color="#e01010"/><stop offset=".25" stop-color="#f0a000"/><stop offset=".45" stop-color="#e8e800"/><stop offset=".62" stop-color="#20b020"/><stop offset=".8" stop-color="#2030d0"/><stop offset="1" stop-color="#500080"/></linearGradient></defs><circle cx="240.7" cy="254.6" r="6.2" fill="#000"/><circle cx="240.7" cy="254.6" r="5.1" fill="#0a48e8"/><rect x="237.10399999999998" y="251.81" width="7.191999999999999" height="5.89" fill="url(#mrb)"/></svg>
<span class="t" style="left:33.75px;top:140.25px;font-size:11.5px;color:#9a9ea6;letter-spacing:-0.220px;">WaningCrescentMoon1-0311.fit</span>
<div style="left:12.75px;top:156.55px;width:874.5px;height:654.2px;background:#8a8a8a;"></div>
<div style="left:13.75px;top:157.55px;width:872.5px;height:652.2px;background:#000;overflow:hidden;"></div>
<svg style="overflow:hidden;left:13.75px;top:157.55px" width="872.5" height="651.7" viewBox="232.5 266.3 872.5 651.7" style="overflow:hidden"><defs>
<clipPath id="mc"><path d="M629.0 402.4 C625.3 406.5 613.2 418.7 607.0 427.0 C600.8 435.3 596.3 443.2 592.0 452.0 C587.7 460.8 583.7 470.3 581.0 480.0 C578.3 489.7 577.1 499.2 576.0 510.0 C574.9 520.8 574.7 534.2 574.5 545.0 C574.3 555.8 574.5 565.0 575.0 575.0 C575.5 585.0 576.0 593.7 577.5 605.0 C579.0 616.3 580.9 631.5 584.0 643.0 C587.1 654.5 590.7 663.0 596.0 674.0 C601.3 685.0 609.2 698.7 616.0 709.0 C622.8 719.3 630.0 727.5 637.0 736.0 C644.0 744.5 651.0 752.8 658.0 760.0 C665.0 767.2 672.0 773.9 679.0 779.0 C686.0 784.1 692.8 787.9 700.0 790.5 C707.2 793.1 718.3 793.7 722.0 794.4 A201.8 201.8 0 0 1 629.0 402.4z"/></clipPath>
<linearGradient id="mv" x1="0" y1="394" x2="0" y2="798" gradientUnits="userSpaceOnUse"><stop offset="0" stop-color="#3e3e3e"/><stop offset=".14" stop-color="#5c5c5c"/><stop offset=".32" stop-color="#848484"/><stop offset=".49" stop-color="#c4c4c4"/><stop offset=".62" stop-color="#f6f6f6"/><stop offset=".88" stop-color="#f6f6f6"/><stop offset="1" stop-color="#8a8a8a"/></linearGradient>
<radialGradient id="mr" cx="687.2" cy="595.6" r="201.8" gradientUnits="userSpaceOnUse"><stop offset=".5" stop-color="#000" stop-opacity="1"/><stop offset=".6" stop-color="#000" stop-opacity=".9"/><stop offset=".7" stop-color="#000" stop-opacity=".79"/><stop offset=".8" stop-color="#000" stop-opacity=".69"/><stop offset=".9" stop-color="#000" stop-opacity=".56"/><stop offset=".955" stop-color="#000" stop-opacity=".38"/><stop offset=".985" stop-color="#000" stop-opacity=".12"/><stop offset="1" stop-color="#000" stop-opacity="0"/></radialGradient>
<filter id="mblur" x="-20%" y="-20%" width="140%" height="140%"><feGaussianBlur stdDeviation="7"/></filter>
<filter id="mtex" x="0" y="0" width="100%" height="100%"><feTurbulence type="fractalNoise" baseFrequency="0.1" numOctaves="3" seed="11" result="n"/><feColorMatrix in="n" type="matrix" values="0 0 0 0 0  0 0 0 0 0  0 0 0 0 0  1.5 0 0 0 -0.55" result="a"/><feComposite in="SourceGraphic" in2="a" operator="arithmetic" k1="-0.5" k2="1" k3="0" k4="0"/></filter>
<pattern id="grid" width="3" height="3" patternUnits="userSpaceOnUse"><path d="M0 .5h3M.5 0v3" stroke="#000" stroke-opacity=".3" stroke-width="1"/></pattern>
</defs>
<g clip-path="url(#mc)">
<g filter="url(#mtex)"><rect x="480" y="390" width="260" height="420" fill="url(#mv)"/></g>
<circle cx="687.2" cy="595.6" r="201.8" fill="url(#mr)"/>
<rect x="480" y="390" width="260" height="420" fill="url(#grid)"/>
<path filter="url(#mblur)" d="M628.0 394.4 C624.3 399.4 612.0 415.1 605.7 424.3 C599.4 433.5 594.8 440.6 590.3 449.5 C585.9 458.4 581.8 468.0 579.0 477.8 C576.2 487.6 574.8 497.2 573.6 508.2 C572.4 519.2 572.0 532.7 571.8 543.8 C571.5 554.8 571.6 564.2 572.0 574.5 C572.5 584.7 573.0 593.6 574.5 605.3 C576.0 616.9 578.1 632.5 581.3 644.3 C584.5 656.0 588.2 664.7 593.7 676.0 C599.2 687.2 607.4 701.1 614.4 711.5 C621.4 722.0 628.8 730.3 636.0 738.8 C643.2 747.4 650.3 755.8 657.5 763.0 C664.6 770.1 671.7 776.9 678.9 782.0 C686.0 787.1 691.7 790.1 700.2 793.5 C708.7 796.9 725.0 800.9 730.0 802.4 L940 830 L940 370z" fill="#000"/>
</g>
<path d="M629.0 402.4 C625.3 406.5 613.2 418.7 607.0 427.0 C600.8 435.3 596.3 443.2 592.0 452.0 C587.7 460.8 583.7 470.3 581.0 480.0 C578.3 489.7 577.1 499.2 576.0 510.0 C574.9 520.8 574.7 534.2 574.5 545.0 C574.3 555.8 574.5 565.0 575.0 575.0 C575.5 585.0 576.0 593.7 577.5 605.0 C579.0 616.3 580.9 631.5 584.0 643.0 C587.1 654.5 590.7 663.0 596.0 674.0 C601.3 685.0 609.2 698.7 616.0 709.0 C622.8 719.3 630.0 727.5 637.0 736.0 C644.0 744.5 651.0 752.8 658.0 760.0 C665.0 767.2 672.0 773.9 679.0 779.0 C686.0 784.1 692.8 787.9 700.0 790.5 C707.2 793.1 718.3 793.7 722.0 794.4" fill="none" stroke="#000" stroke-width="2.500"/>
<path d="M232 588.400h873M669.400 266v652" stroke="#4596ee" stroke-width="1.250" fill="none"/></svg>
<div style="left:886.25px;top:157.55px;width:16.7px;height:651.7px;background:#f0f0f0;"></div>
<div style="left:887.85px;top:174.25px;width:13.2px;height:618.5px;background:#cdcdcd;"></div>
<svg style="left:888.25px;top:795.25px" width="12" height="10" viewBox="1107 904 12 10" ><path d="M1110 907l3.300 3.500 3.300-3.500" fill="none" stroke="#505050" stroke-width="1.700"/></svg>
<svg style="left:888.25px;top:161.25px" width="12" height="10" viewBox="1107 270 12 10" ><path d="M1110 277l3.300-3.500 3.300 3.500" fill="none" stroke="#505050" stroke-width="1.700"/></svg>
<div style="left:0.0px;top:819.25px;width:1067px;height:4px;background:#f0f0f0;"></div>
<div style="left:0.0px;top:823.25px;width:1067px;height:1px;background:#a0a0a0;"></div>
<div style="left:1.0px;top:824.25px;width:1065px;height:15.5px;background:#f0f0f0;"></div>
<span class="t" style="left:3.55px;top:828.25px;font-size:11.3px;color:#000;letter-spacing:-0.187px;">For Help, press F1</span>
<span class="t" style="left:552.25px;top:828.25px;font-size:11.3px;color:#000;letter-spacing:0.041px;">4656x3522</span>
<span class="t" style="left:628.25px;top:828.25px;font-size:11.3px;color:#000;letter-spacing:0.128px;">20%</span>
<div style="left:549.25px;top:825.25px;width:1px;height:14px;background:#e0e0e0;"></div>
<div style="left:624.25px;top:825.25px;width:1px;height:14px;background:#e0e0e0;"></div>
<div style="left:666.25px;top:825.25px;width:1px;height:14px;background:#e0e0e0;"></div>
<div style="left:753.25px;top:825.25px;width:1px;height:14px;background:#e0e0e0;"></div>
<div style="left:825.25px;top:825.25px;width:1px;height:14px;background:#e0e0e0;"></div>
<div style="left:1049.25px;top:825.25px;width:1px;height:14px;background:#e0e0e0;"></div>
<svg style="left:1053.25px;top:827.25px" width="14" height="13" viewBox="1272 936 14 13" ><path d="M1284.500 937l-11 11M1284.500 941l-7 7M1284.500 945l-3 3" stroke="#b0b0b0" stroke-width="1"/></svg>
</div>
<div class="win" style="left:1456.75px;top:773px;width:259.5px;height:213.25px;background:#f0f0f0;overflow:hidden;">
<div style="left:0.0px;top:0px;width:259.5px;height:23px;background:#fff;"></div>
<span class="t" style="left:6.25px;top:7.00px;font-size:11.4px;color:#a0a0a0;">Screen Stretch</span>
<svg style="left:183.25px;top:2.00px" width="70" height="20" viewBox="1640 775 70 20"><path d="M1689.800 779.500l9.500 9.500M1699.300 779.500l-9.500 9.500" stroke="#9a9a9a" stroke-width="1"/></svg>
<span class="t" style="left:193.75px;top:6.00px;font-size:11.4px;color:#9a9a9a;">?</span>
<div style="left:12.55px;top:27px;width:1.2px;height:78px;background:#7a7a7a;"></div>
<div style="left:13.75px;top:27px;width:162.0px;height:77.5px;background:#000;"></div>
<svg style="left:2.25px;top:27.00px" width="180" height="90" viewBox="1459 800 180 90"><path d="M1470.500 877.500 L1470.5 840.5 L1472.5 841.9 L1474.5 848.8 L1476.4 850.0 L1478.4 849.6 L1480.4 851.0 L1482.4 847.5 L1484.3 849.9 L1486.3 852.5 L1488.3 851.6 L1490.3 853.2 L1492.2 850.1 L1494.2 852.1 L1496.2 851.5 L1498.2 853.2 L1500.1 853.8 L1502.1 851.7 L1504.1 853.0 L1506.1 853.7 L1508.0 856.8 L1510.0 856.5 L1512.0 854.3 L1514.0 857.4 L1515.9 854.9 L1517.9 857.4 L1519.9 855.6 L1521.9 855.4 L1523.8 859.6 L1525.8 857.0 L1527.8 857.4 L1529.8 861.1 L1531.7 861.0 L1533.7 858.7 L1535.7 862.0 L1537.7 860.5 L1539.6 861.5 L1541.6 859.7 L1543.6 863.3 L1545.6 862.5 L1547.5 864.1 L1549.5 864.1 L1551.5 861.8 L1553.5 862.4 L1555.5 861.8 L1557.4 862.1 L1559.4 862.0 L1561.4 863.4 L1563.4 865.0 L1565.3 862.7 L1567.3 866.0 L1569.3 864.8 L1571.3 865.0 L1573.2 867.5 L1575.2 866.4 L1577.2 866.0 L1579.2 867.0 L1581.1 868.3 L1583.1 865.7 L1585.1 870.1 L1587.1 866.2 L1589.0 869.7 L1591.0 870.4 L1593.0 867.1 L1595.0 870.8 L1596.9 869.2 L1598.9 870.4 L1600.9 868.2 L1602.9 868.7 L1604.8 869.6 L1606.8 873.3 L1608.8 870.2 L1610.8 873.0 L1612.7 874.0 L1614.7 874.4 L1616.7 872.0 L1618.7 872.4 L1620.6 873.4 L1622.6 874.8 L1624.6 872.1 L1626.6 876.3 L1628.5 874.0 L1630.5 869.6 L1632.5 876.8 L1632.500 877.500z" fill="#fff"/><path d="M1470.500 800v40q0 6 3 7" stroke="#000" fill="none"/><path d="M1463.500 885.500h7.500v-7.500z" fill="#f01010" stroke="#400" stroke-width=".5"/><path d="M1627.500 878v7.500h7.500z" fill="#10e010" stroke="#040" stroke-width=".5"/><rect x="1622" y="871" width="9" height="4.500" fill="#909090"/></svg>
<span class="t" style="left:27.75px;top:117.00px;font-size:10.6px;color:#000;transform:scaleX(0.8606);transform-origin:0 50%;">Minimum</span>
<span class="t" style="left:118.25px;top:117.00px;font-size:10.6px;color:#000;transform:scaleX(0.8708);transform-origin:0 50%;">Maximum</span>
<div class="sunk" style="left:7.5px;top:134px;width:72.75px;height:16px;"></div><div class="btn" style="left:64.75px;top:135.5px;width:14.0px;height:6.5px;"></div><div class="btn" style="left:64.75px;top:142.0px;width:14.0px;height:6.5px;"></div><svg style="left:66.25px;top:134.00px" width="14" height="16" viewBox="1523 907 14 16"><path d="M1526.5 913h4l-2-2.200zM1526.5 917.2h4l-2 2.200z" fill="#000"/></svg><span class="t" style="left:34.47px;top:137.00px;font-size:11.2px;color:#000;transform:scaleX(0.9000);transform-origin:0 50%;">1128.2</span>
<div class="btn" style="left:84.5px;top:134px;width:16.75px;height:16px;"></div>
<svg style="left:84.25px;top:134.00px" width="18" height="16" viewBox="1541 907 18 16"><path d="M1545 912.500h9.500M1552 910l2.500 2.500-2.500 2.500M1554.500 917.500h-9.500M1547.500 915l-2.500 2.500 2.500 2.500" fill="none" stroke="#000" stroke-width="1.100"/></svg>
<div class="sunk" style="left:107.5px;top:134px;width:72.75px;height:16px;"></div><div class="btn" style="left:164.75px;top:135.5px;width:14.0px;height:6.5px;"></div><div class="btn" style="left:164.75px;top:142.0px;width:14.0px;height:6.5px;"></div><svg style="left:166.25px;top:134.00px" width="14" height="16" viewBox="1623 907 14 16"><path d="M1626.5 913h4l-2-2.200zM1626.5 917.2h4l-2 2.200z" fill="#000"/></svg><span class="t" style="left:135.82px;top:137.00px;font-size:11.2px;color:#000;transform:scaleX(0.9000);transform-origin:0 50%;">64366</span>
<div style="left:190.75px;top:30.75px;width:57.5px;height:45.0px;background:linear-gradient(to top right,#000 5%,#555 45%,#aaa 75%,#f4f4f4 100%);border:1px solid;border-color:#6a6a6a #fff #fff #6a6a6a;"></div>
<div class="btn" style="left:190.75px;top:83.25px;width:25.0px;height:18.75px;"></div>
<div class="btn" style="left:224.0px;top:83.25px;width:24.25px;height:18.75px;"></div>
<svg style="left:190.25px;top:83.00px" width="60" height="20" viewBox="1647 856 60 20"><path d="M1662 867.500l5 5" stroke="#111" stroke-width="2.200"/><circle cx="1659" cy="864.500" r="4.500" fill="#50e0e0" stroke="#111" stroke-width="1.300"/><path d="M1656.500 864.500h5M1659 862v5" stroke="#111" stroke-width="1.200"/><path d="M1695 867.500l5 5" stroke="#9a9a9a" stroke-width="2.200"/><circle cx="1692" cy="864.500" r="4.500" fill="#c8c8c8" stroke="#9a9a9a" stroke-width="1.300"/></svg>
<div class="btn" style="left:190.75px;top:108.25px;width:57.5px;height:17.0px;"></div>
<div style="left:231.45px;top:110.5px;width:1px;height:12.5px;background:#a0a0a0;box-shadow:1px 0 0 #fff;"></div>
<span class="t" style="left:199.50px;top:112.00px;font-size:10.6px;color:#000;transform:scaleX(0.9240);transform-origin:0 50%;">Moon</span>
<svg style="left:233.25px;top:112.00px" width="14" height="12" viewBox="1690 885 14 12"><path d="M1693.300 889.500h7l-3.500 4z" fill="#000"/></svg>
<div class="btn" style="left:190.75px;top:134px;width:44.25px;height:17.25px;"></div>
<span class="t" style="left:196.00px;top:138.00px;font-size:10.6px;color:#a0a0a0;transform:scaleX(0.9801);transform-origin:0 50%;text-shadow:1px 1px 0 #fff;">Update</span>
<div class="btn" style="left:237.75px;top:134px;width:16.75px;height:17.25px;"></div>
<span class="t" style="left:240.40px;top:137.00px;font-size:10.6px;color:#000;transform:scaleX(0.9289);transform-origin:0 50%;">&lt;&lt;</span>
<div class="grp2" style="left:2.75px;top:161.25px;width:254.25px;height:48.25px;"></div>
<div style="left:7.75px;top:157px;width:163.0px;height:10px;background:#f0f0f0;"></div>
<span class="t" style="left:10.00px;top:156.00px;font-size:10.6px;color:#000;transform:scaleX(0.9198);transform-origin:0 50%;">Auto-stretch settings (not applicable)</span>
<span class="t" style="left:7.50px;top:170.00px;font-size:10.6px;color:#000;transform:scaleX(0.8944);transform-origin:0 50%;">Minimum Percentile</span>
<span class="t" style="left:97.00px;top:170.00px;font-size:10.6px;color:#000;transform:scaleX(0.8962);transform-origin:0 50%;">Maximum percentile</span>
<div class="sunkg" style="left:7.5px;top:186.25px;width:81.25px;height:16.25px;"></div><div class="btn" style="left:73.25px;top:187.75px;width:14.0px;height:6.62px;"></div><div class="btn" style="left:73.25px;top:194.38px;width:14.0px;height:6.62px;"></div><svg style="left:74.75px;top:186.25px" width="14" height="16.25" viewBox="1531.5 959.25 14 16.25"><path d="M1535.0 965.25h4l-2-2.200zM1535.0 969.7h4l-2 2.200z" fill="#a0a0a0"/></svg>
<div class="sunkg" style="left:97.0px;top:186.25px;width:81.75px;height:16.25px;"></div><div class="btn" style="left:163.25px;top:187.75px;width:14.0px;height:6.62px;"></div><div class="btn" style="left:163.25px;top:194.38px;width:14.0px;height:6.62px;"></div><svg style="left:164.75px;top:186.25px" width="14" height="16.25" viewBox="1621.5 959.25 14 16.25"><path d="M1625.0 965.25h4l-2-2.200zM1625.0 969.7h4l-2 2.200z" fill="#a0a0a0"/></svg>
<div class="btn" style="left:199.5px;top:165.75px;width:43.75px;height:17.5px;"></div>
<span class="t" style="left:213.85px;top:169.00px;font-size:10.6px;color:#a0a0a0;transform:scaleX(0.9428);transform-origin:0 50%;text-shadow:1px 1px 0 #fff;">Set</span>
<div class="btn" style="left:199.5px;top:187px;width:43.75px;height:17.5px;"></div>
<span class="t" style="left:205.35px;top:191.00px;font-size:10.6px;color:#a0a0a0;transform:scaleX(0.9528);transform-origin:0 50%;text-shadow:1px 1px 0 #fff;">Default</span>
</div>
<div class="win" style="left:1008.75px;top:118.75px;width:661.75px;height:592.3px;background:#f0f0f0;overflow:hidden;">
<div style="left:0.0px;top:0.0px;width:661.75px;height:28.25px;background:#fff;"></div>
<span class="t" style="left:8.25px;top:9.25px;font-size:11.4px;color:#a0a0a0;letter-spacing:-0.299px;">Observatory</span>
<span class="t" style="left:596.55px;top:9.25px;font-size:11.4px;color:#9a9a9a;">?</span>
<svg style="left:631.25px;top:5.25px" width="20" height="18" viewBox="1640 124 20 18"><path d="M1644.500 128l9.500 9.500M1654 128l-9.500 9.500" stroke="#9a9a9a" stroke-width="1"/></svg>
<div style="left:7.25px;top:55.25px;width:648px;height:1px;background:#fff;"></div>
<div style="left:7.25px;top:55.25px;width:1px;height:532px;background:#fff;"></div>
<div style="left:9.25px;top:38.25px;width:1px;height:17px;background:#fff;"></div>
<div style="left:9.25px;top:38.25px;width:38px;height:1px;background:#fff;"></div>
<div style="left:46.25px;top:39.25px;width:1px;height:16px;background:#6a6a6a;"></div>
<div style="left:45.25px;top:40.25px;width:1px;height:15px;background:#a0a0a0;"></div>
<span class="t" style="left:13.25px;top:41.25px;font-size:10.6px;color:#000;transform:scaleX(0.8952);transform-origin:0 50%;">All Sky</span>
<div style="left:49.25px;top:38.25px;width:1px;height:17px;background:#fff;"></div>
<div style="left:49.25px;top:38.25px;width:37px;height:1px;background:#fff;"></div>
<div style="left:85.25px;top:39.25px;width:1px;height:16px;background:#6a6a6a;"></div>
<div style="left:84.25px;top:40.25px;width:1px;height:15px;background:#a0a0a0;"></div>
<span class="t" style="left:54.25px;top:41.25px;font-size:10.6px;color:#000;transform:scaleX(0.9042);transform-origin:0 50%;">Zoom</span>
<div style="left:88.25px;top:38.25px;width:1px;height:17px;background:#fff;"></div>
<div style="left:88.25px;top:38.25px;width:42px;height:1px;background:#fff;"></div>
<div style="left:129.25px;top:39.25px;width:1px;height:16px;background:#6a6a6a;"></div>
<div style="left:128.25px;top:40.25px;width:1px;height:15px;background:#a0a0a0;"></div>
<span class="t" style="left:92.25px;top:41.25px;font-size:10.6px;color:#000;transform:scaleX(0.9114);transform-origin:0 50%;">Catalog</span>
<div style="left:132.25px;top:38.25px;width:1px;height:17px;background:#fff;"></div>
<div style="left:132.25px;top:38.25px;width:56px;height:1px;background:#fff;"></div>
<div style="left:187.25px;top:39.25px;width:1px;height:16px;background:#6a6a6a;"></div>
<div style="left:186.25px;top:40.25px;width:1px;height:15px;background:#a0a0a0;"></div>
<span class="t" style="left:137.55px;top:41.25px;font-size:10.6px;color:#000;transform:scaleX(0.9428);transform-origin:0 50%;">Telescope</span>
<div style="left:190.25px;top:38.25px;width:1px;height:17px;background:#fff;"></div>
<div style="left:190.25px;top:38.25px;width:36px;height:1px;background:#fff;"></div>
<div style="left:225.25px;top:39.25px;width:1px;height:16px;background:#6a6a6a;"></div>
<div style="left:224.25px;top:40.25px;width:1px;height:15px;background:#a0a0a0;"></div>
<span class="t" style="left:194.55px;top:41.25px;font-size:10.6px;color:#000;transform:scaleX(0.8841);transform-origin:0 50%;">Dome</span>
<div style="left:228.25px;top:38.25px;width:1px;height:17px;background:#fff;"></div>
<div style="left:228.25px;top:38.25px;width:36px;height:1px;background:#fff;"></div>
<div style="left:263.25px;top:39.25px;width:1px;height:16px;background:#6a6a6a;"></div>
<div style="left:262.25px;top:40.25px;width:1px;height:15px;background:#a0a0a0;"></div>
<span class="t" style="left:233.05px;top:41.25px;font-size:10.6px;color:#000;transform:scaleX(0.9076);transform-origin:0 50%;">Focus</span>
<div style="left:306.25px;top:38.25px;width:1px;height:17px;background:#fff;"></div>
<div style="left:306.25px;top:38.25px;width:46.5px;height:1px;background:#fff;"></div>
<div style="left:351.75px;top:39.25px;width:1.0px;height:16px;background:#6a6a6a;"></div>
<div style="left:350.75px;top:40.25px;width:1.0px;height:15px;background:#a0a0a0;"></div>
<span class="t" style="left:310.55px;top:41.25px;font-size:10.6px;color:#000;transform:scaleX(0.9456);transform-origin:0 50%;">Weather</span>
<div style="left:354.75px;top:38.25px;width:1.0px;height:17px;background:#fff;"></div>
<div style="left:354.75px;top:38.25px;width:48.5px;height:1px;background:#fff;"></div>
<div style="left:402.25px;top:39.25px;width:1px;height:16px;background:#6a6a6a;"></div>
<div style="left:401.25px;top:40.25px;width:1px;height:15px;background:#a0a0a0;"></div>
<span class="t" style="left:359.25px;top:41.25px;font-size:10.6px;color:#000;transform:scaleX(0.9440);transform-origin:0 50%;">Webcam</span>
<div style="left:405.25px;top:38.25px;width:1px;height:17px;background:#fff;"></div>
<div style="left:405.25px;top:38.25px;width:37.5px;height:1px;background:#fff;"></div>
<div style="left:441.75px;top:39.25px;width:1.0px;height:16px;background:#6a6a6a;"></div>
<div style="left:440.75px;top:40.25px;width:1.0px;height:15px;background:#a0a0a0;"></div>
<span class="t" style="left:410.25px;top:41.25px;font-size:10.6px;color:#000;transform:scaleX(0.9133);transform-origin:0 50%;">Setup</span>
<div style="left:265.55px;top:36.25px;width:40.7px;height:20.5px;background:#f0f0f0;border:1px solid;border-color:#fff #6a6a6a #f0f0f0 #fff;box-shadow:inset -1px 0 0 #a0a0a0;"></div>
<span class="t" style="left:271.55px;top:39.25px;font-size:10.6px;color:#000;transform:scaleX(0.8985);transform-origin:0 50%;">Status</span>
<span class="t" style="left:603.25px;top:63.25px;font-size:10.6px;color:#000;transform:scaleX(0.9033);transform-origin:0 50%;">Options</span>
<div class="btn" style="left:641.25px;top:58.25px;width:17.5px;height:20px;"></div>
<svg style="left:643.25px;top:61.25px" width="14" height="14" viewBox="1652 180 14 14"><path d="M1656 182.500v9.500l5-4.750z" fill="#000"/></svg>
<div style="left:11.25px;top:83.05px;width:648px;height:1.0px;background:#6a6a6a;"></div>
<div style="left:11.25px;top:83.05px;width:1px;height:502.2px;background:#6a6a6a;"></div>
<div style="left:12.25px;top:84.05px;width:647px;height:1.0px;background:#a8a8a8;"></div>
<div style="left:20.75px;top:85.75px;width:1.0px;height:499.5px;background:#dadada;"></div>
<div style="left:638.25px;top:85.75px;width:20.5px;height:499.5px;background:#f0f0f0;"></div>
<div style="left:637.25px;top:85.75px;width:1px;height:499.5px;background:#e2e2e2;"></div>
<div style="left:658.25px;top:85.75px;width:1px;height:499.5px;background:#fdfdfd;"></div>
<div style="left:11.75px;top:584.25px;width:647.5px;height:1px;background:#fdfdfd;"></div>
<svg style="left:641.25px;top:96.25px" width="16" height="480" viewBox="1650 215 16 480"><path d="M1653.500 226l4.500-4.500 4.500 4.500M1653.500 682l4.500 4.500 4.500-4.500" fill="none" stroke="#b0b0b0" stroke-width="1.900"/></svg>
<div class="th" style="left:22.5px;top:87.65px;width:81.25px;height:14.6px;"></div><span class="t" style="left:47.22px;top:89.25px;font-size:10.6px;color:#000;font-weight:bold;">Scope</span><div class="th" style="left:104.75px;top:87.65px;width:94.0px;height:14.6px;"></div><span class="t" style="left:144.09px;top:89.25px;font-size:10.6px;color:#000;font-weight:bold;">RA</span><div class="th" style="left:199.75px;top:87.65px;width:94.75px;height:14.6px;"></div><span class="t" style="left:237.40px;top:89.25px;font-size:10.6px;color:#000;font-weight:bold;">Dec</span><div style="left:103.75px;top:87.65px;width:1.0px;height:14.6px;background:#a0a0a0;"></div><div style="left:103.75px;top:102.25px;width:1px;height:83.5px;background-image:linear-gradient(#303030 50%,transparent 50%);background-size:1px 2px;"></div><div style="left:198.75px;top:87.65px;width:1.0px;height:14.6px;background:#a0a0a0;"></div><div style="left:198.75px;top:102.25px;width:1px;height:41.5px;background-image:linear-gradient(#303030 50%,transparent 50%);background-size:1px 2px;"></div><div style="left:22.0px;top:185.75px;width:273.0px;height:1.0px;background:#a0a0a0;"></div><div style="left:294.5px;top:87.65px;width:1.0px;height:98.1px;background:#dcdcdc;"></div><span class="t" style="left:23.70px;top:106.25px;font-size:10.15px;color:#000;">JNow</span><span class="t" style="left:105.95px;top:106.25px;font-size:10.15px;color:#000;">08h 14m 55s</span><span class="t" style="left:200.95px;top:106.25px;font-size:10.15px;color:#000;">+21° 01' 43"</span><span class="t" style="left:23.70px;top:120.25px;font-size:10.15px;color:#000;">J2000</span><span class="t" style="left:105.95px;top:120.25px;font-size:10.15px;color:#000;">08h 13m 46s</span><span class="t" style="left:200.95px;top:120.25px;font-size:10.15px;color:#000;">+21° 05' 22"</span><span class="t" style="left:23.70px;top:134.25px;font-size:10.15px;color:#000;">Alt/Az</span><span class="t" style="left:105.95px;top:134.25px;font-size:10.15px;color:#000;">51.46°</span><span class="t" style="left:200.95px;top:134.25px;font-size:10.15px;color:#000;">104.97°</span><span class="t" style="left:23.70px;top:147.25px;font-size:10.15px;color:#000;">Airmass</span><span class="t" style="left:105.95px;top:147.25px;font-size:10.15px;color:#000;">1.28</span><span class="t" style="left:23.70px;top:161.25px;font-size:10.15px;color:#000;">Target</span><span class="t" style="left:105.95px;top:161.25px;font-size:10.15px;color:#000;">N/A</span><span class="t" style="left:23.70px;top:175.25px;font-size:10.15px;color:#000;">Status</span><span class="t" style="left:105.95px;top:175.25px;font-size:10.15px;color:#000;">Tracking, West of Pier, German Mount</span>
<div class="th" style="left:22.5px;top:226.25px;width:68.25px;height:15.3px;"></div><span class="t" style="left:44.35px;top:228.25px;font-size:10.6px;color:#000;font-weight:bold;">Time</span><div class="th" style="left:91.75px;top:226.25px;width:202.75px;height:15.3px;"></div><span class="t" style="left:179.28px;top:228.25px;font-size:10.6px;color:#000;font-weight:bold;">Value</span><div style="left:90.75px;top:226.25px;width:1.0px;height:15.3px;background:#a0a0a0;"></div><div style="left:90.75px;top:241.55px;width:1px;height:69.0px;background-image:linear-gradient(#303030 50%,transparent 50%);background-size:1px 2px;"></div><div style="left:22.0px;top:310.55px;width:273.0px;height:1.0px;background:#a0a0a0;"></div><div style="left:294.5px;top:226.25px;width:1.0px;height:84.3px;background:#dcdcdc;"></div><span class="t" style="left:23.70px;top:245.25px;font-size:10.15px;color:#000;">Local</span><span class="t" style="left:92.95px;top:245.25px;font-size:10.15px;color:#000;">06:33:13, Tuesday, Sep 24, 2019</span><span class="t" style="left:23.70px;top:259.25px;font-size:10.15px;color:#000;">GMT</span><span class="t" style="left:92.95px;top:259.25px;font-size:10.15px;color:#000;">10:33:13, Tuesday, Sep 24, 2019</span><span class="t" style="left:23.70px;top:272.25px;font-size:10.15px;color:#000;">Sidereal</span><span class="t" style="left:92.95px;top:272.25px;font-size:10.15px;color:#000;">05h 34m 17s</span><span class="t" style="left:23.70px;top:286.25px;font-size:10.15px;color:#000;">Julian Day</span><span class="t" style="left:92.95px;top:286.25px;font-size:10.15px;color:#000;">2458750.93973</span><span class="t" style="left:23.70px;top:300.25px;font-size:10.15px;color:#000;">Transit</span><span class="t" style="left:92.95px;top:300.25px;font-size:10.15px;color:#000;">09:14 in 02h 41m 04s</span>
<div class="th" style="left:298.25px;top:87.65px;width:82.9px;height:14.6px;"></div><span class="t" style="left:322.61px;top:89.25px;font-size:10.6px;color:#000;font-weight:bold;">Device</span><div class="th" style="left:382.15px;top:87.65px;width:248.8px;height:14.6px;"></div><span class="t" style="left:490.35px;top:89.25px;font-size:10.6px;color:#000;font-weight:bold;">Status</span><div style="left:381.15px;top:87.65px;width:1.0px;height:14.6px;background:#a0a0a0;"></div><div style="left:381.15px;top:102.25px;width:1px;height:153.3px;background-image:linear-gradient(#303030 50%,transparent 50%);background-size:1px 2px;"></div><div style="left:297.75px;top:255.55px;width:333.7px;height:1.0px;background:#a0a0a0;"></div><div style="left:630.95px;top:87.65px;width:1.0px;height:167.9px;background:#dcdcdc;"></div><span class="t" style="left:299.45px;top:106.25px;font-size:10.15px;color:#000;">Camera</span><span class="t" style="left:383.35px;top:106.25px;font-size:10.15px;color:#000;">Exposing Light, 0 of 0.0 seconds, -19.8C,</span><span class="t" style="left:299.45px;top:120.25px;font-size:10.15px;color:#000;">Filter</span><span class="t" style="left:383.35px;top:120.25px;font-size:10.15px;color:#000;">None-Open</span><span class="t" style="left:299.45px;top:134.25px;font-size:10.15px;color:#000;">Rotator</span><span class="t" style="left:383.35px;top:134.25px;font-size:10.15px;color:#000;">Not Connected</span><span class="t" style="left:299.45px;top:148.25px;font-size:10.15px;color:#000;">Guider</span><span class="t" style="left:383.35px;top:148.25px;font-size:10.15px;color:#000;">Camera Idle</span><span class="t" style="left:299.45px;top:161.25px;font-size:10.15px;color:#000;">Focuser 1</span><span class="t" style="left:383.35px;top:161.25px;font-size:10.15px;color:#000;">Idle, Position = 14278, Temp = 21.0C</span><span class="t" style="left:299.45px;top:175.25px;font-size:10.15px;color:#000;">Focuser 2</span><span class="t" style="left:383.35px;top:175.25px;font-size:10.15px;color:#000;">Idle, Position = 11002, Temp = 21.9C</span><span class="t" style="left:299.45px;top:189.25px;font-size:10.15px;color:#000;">Dome</span><span class="t" style="left:383.35px;top:189.25px;font-size:10.15px;color:#000;">Open, Slaved, Azimuth 126°</span><span class="t" style="left:299.45px;top:203.25px;font-size:10.15px;color:#000;">Cloud Sensor</span><span class="t" style="left:383.35px;top:203.25px;font-size:10.15px;color:#000;">Not Connected</span><span class="t" style="left:299.45px;top:217.25px;font-size:10.15px;color:#000;">Weather Stn</span><span class="t" style="left:383.35px;top:217.25px;font-size:10.15px;color:#000;">Not Connected</span><span class="t" style="left:299.45px;top:230.25px;font-size:10.15px;color:#000;">Webcam</span><span class="t" style="left:383.35px;top:230.25px;font-size:10.15px;color:#000;">Connected - Frame rate (fps): 30</span><span class="t" style="left:299.45px;top:244.25px;font-size:10.15px;color:#000;">Switch</span><span class="t" style="left:383.35px;top:244.25px;font-size:10.15px;color:#000;">Connected</span>
<div class="th" style="left:298.25px;top:257.25px;width:132.8px;height:14px;"></div><span class="t" style="left:345.03px;top:258.25px;font-size:10.6px;color:#000;font-weight:bold;">Twilight</span><div class="th" style="left:432.05px;top:257.25px;width:99.1px;height:14px;"></div><span class="t" style="left:463.93px;top:258.25px;font-size:10.6px;color:#000;font-weight:bold;">Begins</span><div class="th" style="left:532.15px;top:257.25px;width:98.8px;height:14px;"></div><span class="t" style="left:568.59px;top:258.25px;font-size:10.6px;color:#000;font-weight:bold;">Ends</span><div style="left:431.05px;top:257.25px;width:1.0px;height:14px;background:#a0a0a0;"></div><div style="left:431.05px;top:271.25px;width:1px;height:41.89999999999998px;background-image:linear-gradient(#303030 50%,transparent 50%);background-size:1px 2px;"></div><div style="left:531.15px;top:257.25px;width:1.0px;height:14px;background:#a0a0a0;"></div><div style="left:531.15px;top:271.25px;width:1px;height:41.89999999999998px;background-image:linear-gradient(#303030 50%,transparent 50%);background-size:1px 2px;"></div><div style="left:297.75px;top:313.15px;width:333.7px;height:1.0px;background:#a0a0a0;"></div><div style="left:630.95px;top:257.25px;width:1.0px;height:55.9px;background:#dcdcdc;"></div><span class="t" style="left:299.45px;top:275.25px;font-size:10.15px;color:#000;">Civil</span><span class="t" style="left:468.90px;top:275.25px;font-size:10.15px;color:#000;">06:34</span><span class="t" style="left:568.85px;top:275.25px;font-size:10.15px;color:#000;">19:31</span><span class="t" style="left:299.45px;top:288.25px;font-size:10.15px;color:#000;">Nautical</span><span class="t" style="left:468.90px;top:288.25px;font-size:10.15px;color:#000;">06:03</span><span class="t" style="left:568.85px;top:288.25px;font-size:10.15px;color:#000;">20:02</span><span class="t" style="left:299.45px;top:302.25px;font-size:10.15px;color:#000;">Astronomical</span><span class="t" style="left:468.90px;top:302.25px;font-size:10.15px;color:#000;">05:32</span><span class="t" style="left:568.85px;top:302.25px;font-size:10.15px;color:#000;">20:33</span>
<div class="th" style="left:22.5px;top:315.85px;width:90.75px;height:13.9px;"></div><div class="th" style="left:114.25px;top:315.85px;width:171.0px;height:13.9px;"></div><span class="t" style="left:188.55px;top:316.25px;font-size:10.6px;color:#000;font-weight:bold;">Rise</span><div class="th" style="left:286.25px;top:315.85px;width:171.8px;height:13.9px;"></div><span class="t" style="left:354.77px;top:316.25px;font-size:10.6px;color:#000;font-weight:bold;">Transit</span><div class="th" style="left:459.05px;top:315.85px;width:172.4px;height:13.9px;"></div><span class="t" style="left:537.00px;top:316.25px;font-size:10.6px;color:#000;font-weight:bold;">Set</span><div style="left:113.25px;top:315.85px;width:1.0px;height:13.9px;background:#a0a0a0;"></div><div style="left:113.25px;top:329.75px;width:1px;height:44.0px;background-image:linear-gradient(#303030 50%,transparent 50%);background-size:1px 2px;"></div><div style="left:285.25px;top:315.85px;width:1.0px;height:13.9px;background:#a0a0a0;"></div><div style="left:285.25px;top:329.75px;width:1px;height:28.5px;background-image:linear-gradient(#303030 50%,transparent 50%);background-size:1px 2px;"></div><div style="left:458.05px;top:315.85px;width:1.0px;height:13.9px;background:#a0a0a0;"></div><div style="left:458.05px;top:329.75px;width:1px;height:28.5px;background-image:linear-gradient(#303030 50%,transparent 50%);background-size:1px 2px;"></div><div style="left:22.0px;top:373.75px;width:609.95px;height:1.0px;background:#a0a0a0;"></div><div style="left:631.45px;top:315.85px;width:1.0px;height:57.9px;background:#dcdcdc;"></div><span class="t" style="left:23.70px;top:333.25px;font-size:10.15px;color:#000;">Sun</span><span class="t" style="left:187.05px;top:333.25px;font-size:10.15px;color:#000;">07:00</span><span class="t" style="left:359.45px;top:333.25px;font-size:10.15px;color:#000;">13:03</span><span class="t" style="left:532.55px;top:333.25px;font-size:10.15px;color:#000;">19:05</span><span class="t" style="left:23.70px;top:347.25px;font-size:10.15px;color:#000;">Moon</span><span class="t" style="left:187.05px;top:347.25px;font-size:10.15px;color:#000;">01:48</span><span class="t" style="left:359.45px;top:347.25px;font-size:10.15px;color:#000;">09:19</span><span class="t" style="left:532.55px;top:347.25px;font-size:10.15px;color:#000;">16:44</span><span class="t" style="left:23.70px;top:361.25px;font-size:10.15px;color:#000;">Phase</span>
<div style="left:22.0px;top:357.75px;width:609.95px;height:1.2px;background:#1a1a1a;"></div>
<span class="t" style="left:162.05px;top:361.25px;font-size:10.15px;color:#000;">Waning Crescent 23%</span>
</div>
<div class="win" style="left:1207.75px;top:471.4px;width:413.5px;height:351.1px;background:#f0f0f0;overflow:hidden;">
<div style="left:0.0px;top:0.0px;width:413.5px;height:23.6px;background:#fff;"></div>
<svg style="left:1.25px;top:2.60px" width="18" height="18" viewBox="1209 474 18 18"><path d="M1210 489l4-3M1210.500 485.500l3 1" stroke="#333" stroke-width=".9"/><rect x="1214.800" y="477" width="4" height="11" fill="#555" stroke="#111" stroke-width="1.200"/><path d="M1219.500 478.500h1.500q2.500 0 2.500 4t-2.500 4h-1.500z" fill="#30d0d0" stroke="#111" stroke-width="1.100"/><path d="M1212 481.500h3" stroke="#111"/></svg>
<span class="t" style="left:22.25px;top:5.60px;font-size:11.4px;color:#000;letter-spacing:-0.212px;">Camera Control</span>
<span class="t" style="left:347.25px;top:5.60px;font-size:12px;color:#000;">?</span>
<svg style="left:382.25px;top:2.60px" width="20" height="18" viewBox="1590 474 20 18"><path d="M1595 478l9.500 9.500M1604.500 478l-9.500 9.500" stroke="#111" stroke-width="1.100"/></svg>
<div style="left:6.75px;top:48.6px;width:400.0px;height:1px;background:#fff;"></div>
<div style="left:6.75px;top:48.6px;width:1.0px;height:297.5px;background:#fff;"></div>
<div style="left:405.75px;top:49.6px;width:1.0px;height:297px;background:#6a6a6a;"></div>
<div style="left:404.75px;top:50.6px;width:1.0px;height:295px;background:#a0a0a0;"></div>
<div style="left:6.75px;top:345.6px;width:400.0px;height:1px;background:#6a6a6a;"></div>
<div style="left:7.75px;top:344.6px;width:398.0px;height:1px;background:#a0a0a0;"></div>
<div style="left:51.75px;top:32.6px;width:37.3px;height:1px;background:#fff;"></div>
<div style="left:88.05px;top:33.6px;width:1.0px;height:15px;background:#6a6a6a;"></div>
<div style="left:87.05px;top:34.6px;width:1.0px;height:14px;background:#a0a0a0;"></div>
<span class="t" style="left:55.55px;top:35.60px;font-size:10.6px;color:#000;transform:scaleX(0.9262);transform-origin:0 50%;">Guide</span>
<div style="left:90.75px;top:32.6px;width:37.5px;height:1px;background:#fff;"></div>
<div style="left:127.25px;top:33.6px;width:1px;height:15px;background:#6a6a6a;"></div>
<div style="left:126.25px;top:34.6px;width:1px;height:14px;background:#a0a0a0;"></div>
<span class="t" style="left:94.75px;top:35.60px;font-size:10.6px;color:#000;transform:scaleX(0.9205);transform-origin:0 50%;">Setup</span>
<div style="left:6.55px;top:30.6px;width:45.7px;height:19.5px;background:#f0f0f0;border:1px solid;border-color:#fff #6a6a6a #f0f0f0 #fff;box-shadow:inset -1px 0 0 #a0a0a0;"></div>
<span class="t" style="left:12.75px;top:33.60px;font-size:10.6px;color:#000;transform:scaleX(0.9051);transform-origin:0 50%;">Expose</span>
<span class="t" style="left:13.75px;top:55.60px;font-size:10.6px;color:#000;transform:scaleX(0.8996);transform-origin:0 50%;">Exposure Preset</span>
<div class="sunk" style="left:14.0px;top:70.35px;width:115.75px;height:16.5px;"></div><div class="btn" style="left:112.75px;top:71.85px;width:15.5px;height:13.5px;"></div><svg style="left:115.50px;top:74.60px" width="10" height="8" viewBox="1323.25 546.0 10 8"><path d="M1324.95 548.7h6.600l-3.300 3.600z" fill="#000"/></svg><span class="t" style="left:17.50px;top:73.60px;font-size:11px;color:#000;transform:scaleX(0.8970);transform-origin:0 50%;">*Find DSO</span>
<div class="btn" style="left:135.5px;top:70.6px;width:16.75px;height:16.25px;"></div>
<svg style="left:137.25px;top:72.60px" width="14" height="13" viewBox="1345 544 14 13"><path d="M1348.500 545.200v10l5.600-5z" fill="#000"/></svg>
<span class="t" style="left:161.25px;top:55.60px;font-size:10.6px;color:#000;transform:scaleX(0.9212);transform-origin:0 50%;">Seconds</span>
<div class="sunkg" style="left:161.5px;top:70.6px;width:50.75px;height:16.25px;"></div>
<span class="t" style="left:164.75px;top:73.60px;font-size:11px;color:#a0a0a0;transform:scaleX(0.8970);transform-origin:0 50%;">0.01</span>
<div class="btn" style="left:196.75px;top:72.1px;width:14.0px;height:6.7px;"></div><div class="btn" style="left:196.75px;top:78.8px;width:14.0px;height:6.6px;"></div>
<svg style="left:197.25px;top:71.60px" width="14" height="14" viewBox="1405 543 14 14"><path d="M1409.500 548h4l-2-2.200zM1409.500 552.500h4l-2 2.200z" fill="#a0a0a0"/></svg>
<div class="sunkg" style="left:222.25px;top:58.1px;width:95px;height:7.5px;"></div>
<div class="sunkg" style="left:222.25px;top:70.6px;width:95px;height:16.25px;"></div>
<span class="t" style="left:225.25px;top:73.60px;font-size:11px;color:#000;transform:scaleX(0.8859);transform-origin:0 50%;">Reading</span>
<div class="btn" style="left:330.25px;top:58.1px;width:68.75px;height:20.0px;"></div><span class="t" style="left:354.62px;top:62.60px;font-size:10.6px;color:#a0a0a0;transform:scaleX(0.8934);transform-origin:0 50%;text-shadow:1px 1px 0 #fff;">Start</span>
<div class="btn" style="left:330.25px;top:83.6px;width:68.75px;height:20.5px;"></div><span class="t" style="left:354.88px;top:88.60px;font-size:10.6px;color:#000;transform:scaleX(0.8942);transform-origin:0 50%;">Stop</span>
<span class="t" style="left:13.75px;top:93.60px;font-size:10.6px;color:#000;transform:scaleX(0.9275);transform-origin:0 50%;">Readout Mode</span>
<div class="sunkg" style="left:14.0px;top:108.1px;width:136.5px;height:16.75px;"></div><div class="btn" style="left:133.5px;top:109.6px;width:15.5px;height:13.75px;"></div><svg style="left:136.25px;top:112.48px" width="10" height="8" viewBox="1344.0 583.875 10 8"><path d="M1345.7 586.575h6.600l-3.300 3.600z" fill="#a0a0a0"/></svg><span class="t" style="left:17.50px;top:111.60px;font-size:11px;color:#a0a0a0;transform:scaleX(0.8970);transform-origin:0 50%;">Fast</span>
<span class="t" style="left:13.75px;top:130.60px;font-size:10.6px;color:#000;transform:scaleX(0.9069);transform-origin:0 50%;">Speed</span>
<span class="t" style="left:86.75px;top:130.60px;font-size:10.6px;color:#000;transform:scaleX(0.9013);transform-origin:0 50%;">Frame Type</span>
<div class="sunkg" style="left:14.0px;top:144.85px;width:64.5px;height:16.75px;"></div><div class="btn" style="left:61.5px;top:146.35px;width:15.5px;height:13.75px;"></div><svg style="left:64.25px;top:149.23px" width="10" height="8" viewBox="1272.0 620.625 10 8"><path d="M1273.7 623.325h6.600l-3.300 3.600z" fill="#a0a0a0"/></svg><span class="t" style="left:17.50px;top:147.60px;font-size:11px;color:#a0a0a0;transform:scaleX(0.8970);transform-origin:0 50%;">ISO</span>
<div class="sunkg" style="left:86.75px;top:144.85px;width:62.25px;height:16.75px;"></div><div class="btn" style="left:132.0px;top:146.35px;width:15.5px;height:13.75px;"></div><svg style="left:134.75px;top:149.23px" width="10" height="8" viewBox="1342.5 620.625 10 8"><path d="M1344.2 623.325h6.600l-3.300 3.600z" fill="#a0a0a0"/></svg><span class="t" style="left:90.25px;top:147.60px;font-size:11px;color:#a0a0a0;transform:scaleX(0.8970);transform-origin:0 50%;">Light</span>
<span class="t" style="left:13.75px;top:168.60px;font-size:10.6px;color:#000;transform:scaleX(0.9019);transform-origin:0 50%;">Filter Wheel</span>
<div class="sunkg" style="left:14.0px;top:182.35px;width:136.5px;height:17.5px;"></div><div class="btn" style="left:133.5px;top:183.85px;width:15.5px;height:14.5px;"></div><svg style="left:136.25px;top:187.10px" width="10" height="8" viewBox="1344.0 658.5 10 8"><path d="M1345.7 661.2h6.600l-3.300 3.600z" fill="#a0a0a0"/></svg><span class="t" style="left:17.50px;top:186.60px;font-size:11px;color:#a0a0a0;transform:scaleX(0.8970);transform-origin:0 50%;">None-Open</span>
<div class="grp2" style="left:161.5px;top:101.6px;width:156.5px;height:54px;"></div>
<div style="left:167.25px;top:96.6px;width:45.5px;height:10px;background:#f0f0f0;"></div>
<span class="t" style="left:169.75px;top:96.60px;font-size:10.6px;color:#000;transform:scaleX(0.8812);transform-origin:0 50%;">Subframe</span>
<div class="sunk" style="left:169.75px;top:113.1px;width:11.5px;height:11.5px;"></div>
<span class="t" style="left:185.75px;top:113.60px;font-size:10.6px;color:#000;transform:scaleX(0.9052);transform-origin:0 50%;">On</span>
<div class="sunkg" style="left:218.5px;top:113.1px;width:11.5px;height:11.5px;"></div>
<span class="t" style="left:235.75px;top:113.60px;font-size:10.6px;color:#a0a0a0;transform:scaleX(0.9115);transform-origin:0 50%;">Mouse</span>
<div class="btn" style="left:274.0px;top:110.35px;width:16.25px;height:17.75px;"></div>
<div class="btn" style="left:296.0px;top:110.35px;width:16.25px;height:17.75px;"></div>
<svg style="left:273.25px;top:109.60px" width="40" height="19" viewBox="1481 581 40 19"><rect x="1486.500" y="586.500" width="7.500" height="7.500" fill="none" stroke="#a0a0a0"/><rect x="1489" y="589" width="2.500" height="2.500" fill="#a0a0a0"/><path d="M1484.500 596l2-2" stroke="#a0a0a0"/><rect x="1507" y="585.500" width="10" height="10" fill="none" stroke="#a0a0a0"/><path d="M1507 585.500l10 10M1517 585.500l-10 10" stroke="#a0a0a0" stroke-width=".9"/></svg>
<div class="sunkg" style="left:167.25px;top:132.85px;width:144.5px;height:17.0px;"></div>
<span class="t" style="left:169.25px;top:136.60px;font-size:11px;color:#a0a0a0;transform:scaleX(0.9180);transform-origin:0 50%;white-space:pre;">X:   0 Y:   0 W:4656 H:3522</span>
<svg style="left:328.25px;top:106.60px" width="14" height="14" viewBox="1536 578 14 14"><circle cx="1543" cy="585" r="5" fill="#fff" stroke="#8a8a8a" stroke-width="1"/><path d="M1539.4 588.6A5.100 5.100 0 0 1 1546.6 581.4" fill="none" stroke="#5a5a5a" stroke-width="1.100"/><path d="M1539.4 588.6A5.100 5.100 0 0 0 1546.6 581.4" fill="none" stroke="#fff" stroke-width="1.100"/></svg>
<span class="t" style="left:345.75px;top:109.60px;font-size:10.6px;color:#000;transform:scaleX(0.8823);transform-origin:0 50%;">Single</span>
<svg style="left:328.25px;top:121.10px" width="14" height="14" viewBox="1536 592.5 14 14"><circle cx="1543" cy="599.5" r="5" fill="#fff" stroke="#8a8a8a" stroke-width="1"/><path d="M1539.4 603.1A5.100 5.100 0 0 1 1546.6 595.9" fill="none" stroke="#5a5a5a" stroke-width="1.100"/><path d="M1539.4 603.1A5.100 5.100 0 0 0 1546.6 595.9" fill="none" stroke="#fff" stroke-width="1.100"/></svg>
<span class="t" style="left:345.25px;top:124.60px;font-size:10.6px;color:#000;transform:scaleX(0.9137);transform-origin:0 50%;">Continuous</span>
<svg style="left:328.25px;top:136.10px" width="14" height="14" viewBox="1536 607.5 14 14"><circle cx="1543" cy="614.5" r="5" fill="#fff" stroke="#8a8a8a" stroke-width="1"/><path d="M1539.4 618.1A5.100 5.100 0 0 1 1546.6 610.9" fill="none" stroke="#5a5a5a" stroke-width="1.100"/><path d="M1539.4 618.1A5.100 5.100 0 0 0 1546.6 610.9" fill="none" stroke="#fff" stroke-width="1.100"/><circle cx="1543" cy="614.5" r="1.800" fill="#000"/></svg>
<div class="btn" style="left:344.0px;top:137.35px;width:53.75px;height:15.75px;"></div><span class="t" style="left:350.38px;top:139.60px;font-size:10.6px;color:#000;transform:scaleX(0.9277);transform-origin:0 50%;">Autosave</span>
<span class="t" style="left:342.75px;top:161.60px;font-size:10.6px;color:#000;transform:scaleX(0.8897);transform-origin:0 50%;">Options</span>
<div class="btn" style="left:381.75px;top:158.6px;width:16.5px;height:17.5px;"></div>
<svg style="left:383.25px;top:160.60px" width="14" height="14" viewBox="1591 632 14 14"><path d="M1594.500 633.800v10l5.600-5z" fill="#000"/></svg>
<span class="t" style="left:161.25px;top:166.60px;font-size:10.6px;color:#000;transform:scaleX(0.9035);transform-origin:0 50%;">X Binning</span>
<span class="t" style="left:216.75px;top:166.60px;font-size:10.6px;color:#000;transform:scaleX(0.9073);transform-origin:0 50%;">Y Binning</span>
<div class="sunkg" style="left:161.5px;top:182.35px;width:47.0px;height:17.5px;"></div><div class="btn" style="left:191.5px;top:183.85px;width:15.5px;height:14.5px;"></div><svg style="left:194.25px;top:187.10px" width="10" height="8" viewBox="1402.0 658.5 10 8"><path d="M1403.7 661.2h6.600l-3.300 3.600z" fill="#a0a0a0"/></svg><span class="t" style="left:165.00px;top:186.60px;font-size:11px;color:#a0a0a0;transform:scaleX(0.8970);transform-origin:0 50%;">1</span>
<div class="sunkg" style="left:216.75px;top:182.35px;width:47.25px;height:17.5px;"></div><div class="btn" style="left:249.0px;top:183.85px;width:13.5px;height:14.5px;"></div><svg style="left:250.75px;top:187.10px" width="10" height="8" viewBox="1458.5 658.5 10 8"><path d="M1460.2 661.2h6.600l-3.300 3.600z" fill="#a0a0a0"/></svg><span class="t" style="left:220.25px;top:186.60px;font-size:11px;color:#a0a0a0;transform:scaleX(0.8970);transform-origin:0 50%;">Same</span>
<svg style="left:272.75px;top:173.60px" width="14" height="14" viewBox="1480.5 645 14 14"><circle cx="1487.5" cy="652" r="5" fill="#f0f0f0" stroke="#8a8a8a" stroke-width="1"/><path d="M1483.9 655.6A5.100 5.100 0 0 1 1491.1 648.4" fill="none" stroke="#5a5a5a" stroke-width="1.100"/><path d="M1483.9 655.6A5.100 5.100 0 0 0 1491.1 648.4" fill="none" stroke="#fff" stroke-width="1.100"/><circle cx="1487.5" cy="652" r="1.800" fill="#a0a0a0"/></svg>
<span class="t" style="left:290.75px;top:176.60px;font-size:10.6px;color:#a0a0a0;transform:scaleX(0.8766);transform-origin:0 50%;">Camera 1</span>
<svg style="left:272.75px;top:188.60px" width="14" height="14" viewBox="1480.5 660 14 14"><circle cx="1487.5" cy="667" r="5" fill="#f0f0f0" stroke="#8a8a8a" stroke-width="1"/><path d="M1483.9 670.6A5.100 5.100 0 0 1 1491.1 663.4" fill="none" stroke="#5a5a5a" stroke-width="1.100"/><path d="M1483.9 670.6A5.100 5.100 0 0 0 1491.1 663.4" fill="none" stroke="#fff" stroke-width="1.100"/></svg>
<span class="t" style="left:290.75px;top:191.60px;font-size:10.6px;color:#a0a0a0;transform:scaleX(0.8981);transform-origin:0 50%;">Camera 2</span>
<div class="btn" style="left:343.5px;top:182.35px;width:56.75px;height:20.75px;"></div><span class="t" style="left:354.88px;top:186.60px;font-size:10.6px;color:#000;transform:scaleX(0.9015);transform-origin:0 50%;">Less &lt;&lt;</span>
<div style="left:13.25px;top:212.6px;width:389px;height:1px;background:#8a8a8a;"></div>
<div style="left:13.25px;top:213.6px;width:389px;height:1px;background:#c8c8c8;"></div>
<div style="left:13.5px;top:212.85px;width:132.0px;height:123.25px;background:#f0f0f0;border:1px solid;border-color:#8a8a8a #fff #fff #8a8a8a;"></div>
<svg style="left:13.25px;top:213.60px" width="133" height="123" viewBox="1221 685 133 123"><path d="M1222.5 806.5 L1225 806.5 L1230 745 L1234 806.5 L1236 806.5 L1239.5 737 L1244 806.5 L1248 806.5 L1253 745 L1256 738 L1258 737 L1263 806.5 L1271 806.5 L1276.5 735 L1281 790 L1282 806.5 L1285.5 746 L1290 806.5 L1294 806.5 L1297 720 L1299 687 L1303 687 L1308 745 L1312 806.5 L1321 806.5 L1326.5 720 L1330 740 L1335 806.5 L1336 806.5 L1340 734 L1345 741 L1349 743 L1352.5 740" fill="none" stroke="#111" stroke-width="0.900"/></svg>
<span class="t" style="left:15.55px;top:225.60px;font-size:10.6px;color:#b0b0b0;transform:scaleX(0.8970);transform-origin:0 50%;">30</span>
<span class="t" style="left:88.25px;top:322.60px;font-size:12.2px;color:#b0b0b0;transform:scaleX(1.0595);transform-origin:0 50%;">FWHM(1)</span>
<div style="left:148.5px;top:212.85px;width:127.25px;height:123.25px;background:#f0f0f0;border:1px solid;border-color:#6a6a6a #fff #fff #6a6a6a;box-shadow:inset 1px 0 0 #a0a0a0;"></div>
<div style="left:275.75px;top:212.85px;width:126.5px;height:123.25px;background:#f0f0f0;border:1px solid;border-color:#6a6a6a #fff #fff #6a6a6a;box-shadow:inset 1px 0 0 #a0a0a0;"></div>
<span class="t" style="left:150.25px;top:215.60px;font-size:11px;color:#000;transform:scaleX(0.8601);transform-origin:0 50%;">Camera 1 Information</span>
<span class="t" style="left:150.25px;top:227.60px;font-size:11px;color:#000;transform:scaleX(0.8736);transform-origin:0 50%;">Reading CCD camera</span>
<span class="t" style="left:150.25px;top:239.60px;font-size:11px;color:#000;transform:scaleX(0.8972);transform-origin:0 50%;">0 of 0.007 sec</span>
<span class="t" style="left:150.25px;top:251.60px;font-size:11px;color:#000;transform:scaleX(0.8693);transform-origin:0 50%;">Filter: None-Open</span>
<span class="t" style="left:150.25px;top:263.60px;font-size:11px;color:#000;transform:scaleX(0.8674);transform-origin:0 50%;">Cooler power 100%</span>
<span class="t" style="left:150.25px;top:275.60px;font-size:11px;color:#000;transform:scaleX(0.8950);transform-origin:0 50%;">Sensor Temp -19.8</span>
<span class="t" style="left:150.25px;top:287.60px;font-size:11px;color:#000;transform:scaleX(0.8917);transform-origin:0 50%;">Setpoint: -20.0</span>
<span class="t" style="left:150.25px;top:299.60px;font-size:11px;color:#000;transform:scaleX(0.8953);transform-origin:0 50%;">WaningCrescentMoon1-031:</span>
<span class="t" style="left:150.25px;top:311.60px;font-size:11px;color:#000;transform:scaleX(0.8935);transform-origin:0 50%;">Image 220 of 500</span>
<span class="t" style="left:150.25px;top:323.60px;font-size:11px;color:#000;transform:scaleX(0.8901);transform-origin:0 50%;">Elapsed 59 of 4 sec</span>
<span class="t" style="left:277.25px;top:215.60px;font-size:11px;color:#000;transform:scaleX(0.8648);transform-origin:0 50%;">Camera 2 Information</span>
<span class="t" style="left:277.25px;top:227.60px;font-size:11px;color:#000;transform:scaleX(0.8595);transform-origin:0 50%;">Camera Idle</span>
<span class="t" style="left:277.25px;top:251.60px;font-size:11px;color:#000;transform:scaleX(0.8675);transform-origin:0 50%;">Cooler power 76%</span>
<span class="t" style="left:277.25px;top:263.60px;font-size:11px;color:#000;transform:scaleX(0.9004);transform-origin:0 50%;">Sensor Temp -19.9</span>
<span class="t" style="left:277.25px;top:275.60px;font-size:11px;color:#000;transform:scaleX(0.8945);transform-origin:0 50%;">Setpoint: -20.0</span>
</div>
<div style="left:74px;top:1011px;width:1771px;height:37px;background:#1e1e1e;"></div>
<svg style="left:88px;top:1021.500px" width="17" height="17" viewBox="0 0 17 17"><path d="M0 2.300L6.800 1.300V7.900H0zM7.700 1.200L16.500 0V7.900H7.700zM0 8.700H6.800V15.300L0 14.300zM7.700 8.700H16.500V16.600L7.700 15.400z" fill="#fff"/></svg>
<div style="left:118.3px;top:1011px;width:317.2px;height:37px;background:#f2f2f2;border-bottom:1px solid #c8c8c8;"></div>
<svg style="left:128px;top:1021px" width="18" height="18" viewBox="0 0 18 18"><circle cx="10.800" cy="6.600" r="4.600" fill="none" stroke="#222" stroke-width="1.200"/><path d="M7.400 10.200L1.500 16.200" stroke="#222" stroke-width="1.300"/></svg>
<span class="t" style="left:155.50px;top:1024.00px;font-size:13.7px;color:#3c3c3c;letter-spacing:-0.168px;">Type here to search</span>
<svg style="left:449px;top:1021px" width="18" height="18" viewBox="0 0 18 18"><circle cx="8.600" cy="8.600" r="6.300" fill="none" stroke="#fff" stroke-width="1.800"/></svg>
<svg style="left:492px;top:1021px" width="20" height="18" viewBox="0 0 20 18"><path d="M3.500 4.500h9.500v8.500h-9.500z" fill="none" stroke="#fff" stroke-width="1.200"/><path d="M2 2.400h12M2 15.200h12" stroke="#fff" stroke-width="1.100"/><path d="M15.600 2v4M15.600 8v7.500" stroke="#fff" stroke-width="1.200"/></svg>
<svg style="left:539px;top:1020px" width="20" height="20" viewBox="0 0 20 20"><path d="M1.200 9.600C1.800 4 5.800 1 10.200 1c5 0 8.300 3.600 8.300 8.700v2H7.200c.2 2.800 2.300 4.300 5 4.300 2 0 3.800-.5 5.600-1.500v3.600c-1.900 1-3.900 1.500-6.500 1.500-5 0-8.300-3-8.300-7.700 0-2.500 1.300-4.800 3.700-6.100-1.700.4-4.200 1.700-5.500 3.800zM7.300 8.300h6.600c-.1-2-1.200-3.500-3.300-3.500-1.900 0-3.100 1.500-3.300 3.500z" fill="#1e88e5"/></svg>
<svg style="left:583px;top:1020px" width="22" height="20" viewBox="0 0 22 20"><path d="M1 2.500h7l1.500 2H21V17H1z" fill="#e8a81c"/><path d="M1 5.500h20V17H1z" fill="#fcd462"/><path d="M5 11h12v6H5z" fill="#3b8fd9"/><path d="M8 14h6v3H8z" fill="#fcd462"/></svg>
<svg style="left:627px;top:1017px" width="24" height="24" viewBox="0 0 24 24"><path d="M8 7V5a4 4 0 0 1 8 0v2" fill="none" stroke="#ddd" stroke-width="1.200"/><path d="M1.500 7h21v14.500a1 1 0 0 1-1 1h-19a1 1 0 0 1-1-1z" fill="#fff"/><rect x="7.300" y="10.500" width="4.300" height="4.300" fill="#f25022"/><rect x="12.400" y="10.500" width="4.300" height="4.300" fill="#7fba00"/><rect x="7.300" y="15.600" width="4.300" height="4.300" fill="#00a4ef"/><rect x="12.400" y="15.600" width="4.300" height="4.300" fill="#ffb900"/></svg>
<svg style="left:672px;top:1019px" width="25" height="20" viewBox="0 0 25 20"><path d="M1 7.500L12.500 1L24 7.500V19H1z" fill="#fff"/><path d="M3.500 9.300L21.500 8.800L14 15L15 12.500z" fill="#1e1e1e"/></svg>
<svg style="left:718px;top:1018px" width="23" height="23" viewBox="0 0 23 23"><circle cx="11.500" cy="11.500" r="11" fill="#111"/><circle cx="11.500" cy="11.500" r="9.300" fill="#fff"/><path d="M11.500 11.500L7.500 6M11.500 11.500l2 6" stroke="#000" stroke-width="1.300"/><path d="M11.500 11.500l5-5" stroke="#e00" stroke-width=".9"/><path d="M11.500 3v2M11.500 18v2M3 11.500h2M18 11.500h2" stroke="#000" stroke-width="1"/></svg>
<svg style="left:763.500px;top:1018px" width="23" height="23" viewBox="0 0 23 23"><rect width="23" height="23" fill="#000"/><ellipse cx="11.500" cy="12" rx="9.500" ry="3.200" fill="none" stroke="#c8a070" stroke-width="1.800"/><ellipse cx="11.500" cy="11.500" rx="4.600" ry="3.600" fill="#e0b888"/></svg>
<svg style="left:809px;top:1018px" width="23" height="23" viewBox="0 0 23 23"><defs><linearGradient id="tcg" x1="0" y1="0" x2="1" y2="1"><stop offset="0" stop-color="#555"/><stop offset=".6" stop-color="#9a9a9a"/><stop offset="1" stop-color="#d0d0d0"/></linearGradient></defs><rect width="23" height="23" fill="url(#tcg)"/><path d="M0 19l6-1 6 2 11 .5V23H0z" fill="#000"/><path d="M7 14L19 2l3 1.500L8 14.500z" fill="#f4f4f4"/><rect x="19.500" y="8" width="1.200" height="1.200" fill="#ee2"/></svg>
<div style="left:843px;top:1011px;width:44.5px;height:37px;background:#4a4a4a;"></div>
<svg style="left:855px;top:1020px" width="20" height="20" viewBox="0 0 20 20"><defs><linearGradient id="trb" x1="0" x2="1"><stop offset="0" stop-color="#e01010"/><stop offset=".25" stop-color="#f0a000"/><stop offset=".45" stop-color="#e8e800"/><stop offset=".62" stop-color="#20b020"/><stop offset=".8" stop-color="#2030d0"/><stop offset="1" stop-color="#500080"/></linearGradient></defs><circle cx="10" cy="10" r="9.600" fill="#000"/><circle cx="10" cy="10" r="8" fill="#0a50f0"/><rect x="4.500" y="6" width="11" height="8.500" fill="url(#trb)"/></svg>
<div style="left:711px;top:1046px;width:37px;height:2px;background:#a8a8a8;"></div>
<div style="left:756.5px;top:1046px;width:37px;height:2px;background:#a8a8a8;"></div>
<div style="left:802px;top:1046px;width:37px;height:2px;background:#a8a8a8;"></div>
<div style="left:843px;top:1046px;width:44.5px;height:2px;background:#b4b4b4;"></div>
<svg style="left:1640px;top:1018px" width="210" height="28" viewBox="1640 1018 210 28"><path d="M1648.500 1032.500l5.500-5.500 5.500 5.500" fill="none" stroke="#fff" stroke-width="1.200"/><path d="M1670 1033.500a3.300 3.300 0 0 1 .8-6.500a4.600 4.600 0 0 1 8.600-.8a3.700 3.700 0 0 1 1.300 7.300z" fill="#e6e6e6"/><path d="M1693.500 1025.500h11.500v8h-11.500zM1696 1036.500h7M1699.500 1033.500v3" fill="none" stroke="#fff" stroke-width="1.100"/><path d="M1691.300 1024.300h4.200v3h-4.200zM1693.400 1027.300v8" fill="none" stroke="#fff" stroke-width="1"/><path d="M1713.500 1027h2.500l3.300-3.300v10.800l-3.300-3.300h-2.500z" fill="none" stroke="#fff" stroke-width="1.100"/><circle cx="1723.800" cy="1032.800" r="3.900" fill="#e81123"/><path d="M1722.200 1031.200l3.200 3.200M1725.400 1031.200l-3.200 3.200" stroke="#fff" stroke-width="1.100"/><path d="M1807.500 1022h14.500v10.500h-5.500l-3.500 3.300v-3.300h-5.500z" fill="#fff"/><path d="M1810 1025h9.500M1810 1027.500h9.500M1810 1030h6" stroke="#1e1e1e" stroke-width=".9"/><circle cx="1821.300" cy="1036.300" r="7" fill="#1e1e1e" stroke="#8c8c8c" stroke-width="1.100"/><path d="M1840.500 1011v37" stroke="#6a6a6a" stroke-width="1"/></svg>
<span class="t" style="left:1751.00px;top:1016.00px;font-size:11.3px;color:#fff;letter-spacing:-0.696px;">06:33</span>
<span class="t" style="left:1736.80px;top:1032.00px;font-size:11.3px;color:#fff;letter-spacing:-0.340px;">2019-09-24</span>
<span class="t" style="left:1818.60px;top:1031.00px;font-size:10.5px;color:#fff;">1</span>
<div style="left:0px;top:1048px;width:1920px;height:52px;background:#fff;"></div>
<svg style="left:330px;top:53.500px" width="16.500" height="22" viewBox="0 0 16 22"><path d="M2.500 1.500v14.500l3.400-3.200 2.300 5.300 2.400-1-2.300-5.200h4.700z" fill="#fff" stroke="#000" stroke-width="1" stroke-linejoin="miter"/></svg>
</div>
</body></html>
